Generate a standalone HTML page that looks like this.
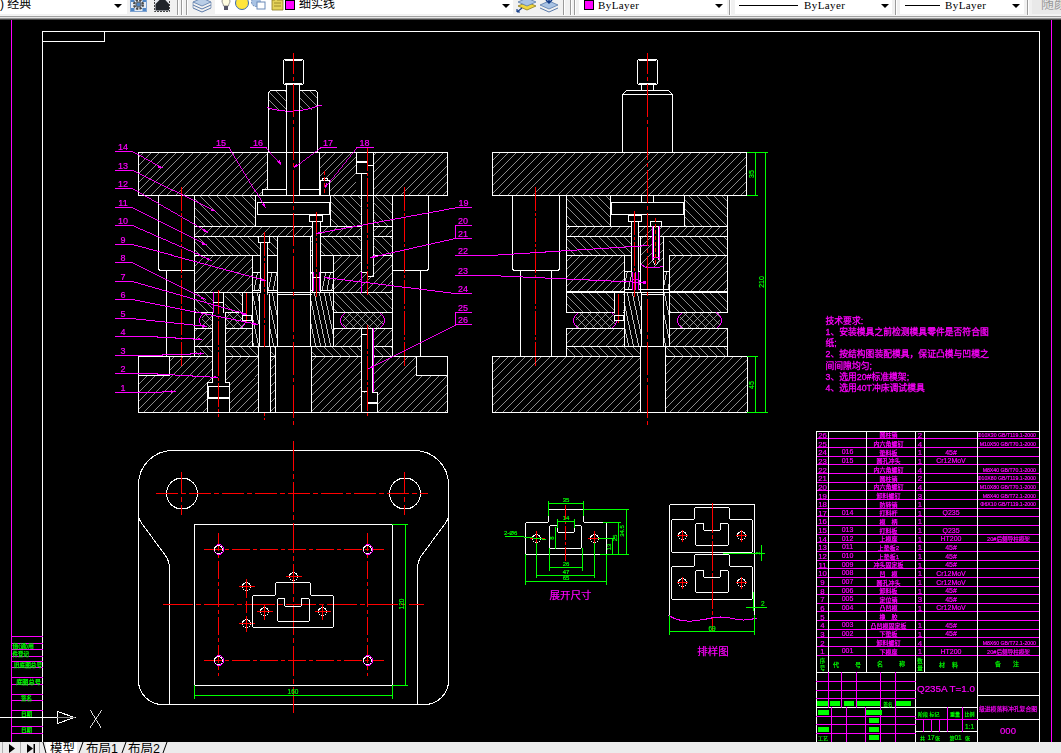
<!DOCTYPE html>
<html lang="zh"><head><meta charset="utf-8"><title>AutoCAD</title>
<style>
html,body{margin:0;padding:0;background:#000;overflow:hidden}
body{width:1061px;height:753px;position:relative;font-family:"Liberation Sans","Noto Sans CJK SC",sans-serif}
#cad{position:absolute;left:0;top:0;width:1061px;height:753px;display:block;will-change:transform}
#cad text{font-family:"Liberation Sans","Noto Sans CJK SC",sans-serif}
#top{position:absolute;left:0;top:0;width:1061px;height:20px;background:#f1f1f1;overflow:hidden;font-size:12px;line-height:12px;color:#000}
#top .w{position:absolute;top:0;height:14px;background:#fff}
#top .t{position:absolute;top:-2px;white-space:nowrap}
#top .by{font-family:"Liberation Serif",serif;font-size:11px;top:-1px;letter-spacing:0.4px}
#top .ar{position:absolute;top:4px;width:0;height:0;border-left:4px solid transparent;border-right:4px solid transparent;border-top:4px solid #000}
#top .sq{position:absolute;top:0;width:8px;height:8px;background:#f0f;border:1px solid #000}
#top .ln{position:absolute;top:5px;height:1px;background:#000}
#top .sep{position:absolute;top:0;width:1px;height:15px;background:#9a9a9a;border-right:1px solid #fff}
#top .edge{position:absolute;left:0;top:15px;width:1061px;height:5px;background:linear-gradient(#f4f4f4 0,#f4f4f4 20%,#a0a0a0 20%,#a0a0a0 40%,#e6e6e6 40%,#e6e6e6 60%,#969696 60%,#969696 80%,#4a4a4a 80%,#4a4a4a 100%)}
#top .ic{position:absolute;top:0}
#bot{position:absolute;left:0;top:742px;width:1061px;height:11px;background:#ececec;overflow:hidden;font-size:12.5px;line-height:12px;color:#000}
#bot .t{position:absolute;top:1px;white-space:nowrap}
#bot .tab{position:absolute;top:0;height:11px;background:#fff}

</style></head><body>
<svg id="cad" width="1061" height="753" viewBox="0 0 1061 753" shape-rendering="crispEdges" fill="none" stroke-width="1">
<rect x="0" y="0" width="1061" height="753" fill="#000"/>
<g id="front">
<path d="M142.7 153L139 156.7M151.04 153L139 165.04M159.38 153L139 173.38M167.72 153L139 181.72M176.06 153L139 190.06M184.4 153L142.4 195M192.74 153L150.74 195M201.08 153L159.08 195M209.42 153L167.42 195M217.76 153L175.76 195M226.1 153L184.1 195M234.44 153L192.44 195M242.78 153L200.78 195M251.12 153L209.12 195M259.46 153L217.46 195M267.8 153L225.8 195M276.14 153L234.14 195M284.48 153L242.48 195M292.82 153L250.82 195M301.16 153L259.16 195M309.5 153L267.5 195M317.84 153L275.84 195M326.18 153L284.18 195M334.52 153L292.52 195M342.86 153L300.86 195M351.2 153L309.2 195M359.54 153L317.54 195M367.88 153L325.88 195M376.22 153L334.22 195M384.56 153L342.56 195M392.9 153L350.9 195M401.24 153L359.24 195M409.58 153L367.58 195M417.92 153L375.92 195M426.26 153L384.26 195M434.6 153L392.6 195M442.94 153L400.94 195M447 157.28L409.28 195M447 165.62L417.62 195M447 173.96L425.96 195M447 182.3L434.3 195M447 190.64L442.64 195" stroke="#c0c0c0" fill="none" stroke-width="0.72"/>
<rect x="138.5" y="152.5" width="309" height="43" stroke="#fff" fill="none"/>
<rect x="267" y="153" width="53" height="43" fill="#000"/>
<rect x="262" y="189" width="6" height="7" fill="#000"/>
<line x1="267.5" y1="152" x2="267.5" y2="190" stroke="#fff"/>
<line x1="319.5" y1="152" x2="319.5" y2="196" stroke="#fff"/>
<line x1="262" y1="189.5" x2="287" y2="189.5" stroke="#fff"/>
<line x1="299" y1="189.5" x2="320" y2="189.5" stroke="#fff"/>
<line x1="262.5" y1="189" x2="262.5" y2="196" stroke="#fff"/>
<line x1="262" y1="195.5" x2="320" y2="195.5" stroke="#fff"/>
<rect x="320" y="178" width="10" height="18" fill="#000"/>
<rect x="320.5" y="180.5" width="9" height="15" stroke="#fff" fill="none"/>
<line x1="322" y1="178.5" x2="328" y2="178.5" stroke="#fff"/>
<line x1="322.5" y1="178" x2="322.5" y2="181" stroke="#fff"/>
<line x1="327.5" y1="178" x2="327.5" y2="181" stroke="#fff"/>
<line x1="324.5" y1="171" x2="324.5" y2="199" stroke="#f00" stroke-dasharray="4 2"/>
<rect x="356" y="153" width="18" height="43" fill="#000"/>
<line x1="356.5" y1="152" x2="356.5" y2="174" stroke="#fff"/>
<line x1="373.5" y1="152" x2="373.5" y2="273" stroke="#fff"/>
<line x1="356" y1="161.5" x2="368" y2="161.5" stroke="#fff"/>
<line x1="356" y1="162.5" x2="368" y2="162.5" stroke="#fff"/>
<line x1="356" y1="173.5" x2="368" y2="173.5" stroke="#fff"/>
<line x1="367" y1="165.5" x2="374" y2="165.5" stroke="#fff"/>
<line x1="361.5" y1="173" x2="361.5" y2="273" stroke="#fff"/>
<path d="M269 108.54L270.46 110M269 100.2L278.8 110M269 91.86L287.14 110M276.48 91L295.48 110M284.82 91L303.82 110M293.16 91L312.16 110M301.5 91L317 106.5M309.84 91L317 98.16" stroke="#c0c0c0" fill="none" stroke-width="0.72"/>
<path d="M268.5 152.5V93.5Q268.5 90.5 271.5 90.5H314.5Q317.5 90.5 317.5 93.5V152.5" stroke="#fff" fill="none"/>
<rect x="269" y="110" width="48" height="42" fill="#000"/>
<rect x="286" y="85" width="14" height="117" fill="#000"/>
<path d="M267 107.5Q292 116 321.5 105" stroke="#f0f" fill="none"/>
<line x1="286.5" y1="84" x2="286.5" y2="202" stroke="#fff"/>
<line x1="299.5" y1="84" x2="299.5" y2="202" stroke="#fff"/>
<line x1="286" y1="201.5" x2="300" y2="201.5" stroke="#fff"/>
<rect x="283.5" y="59.5" width="20" height="25" stroke="#fff" fill="none" rx="2"/>
<line x1="285" y1="60.5" x2="302" y2="60.5" stroke="#fff"/>
<line x1="285" y1="83.5" x2="302" y2="83.5" stroke="#fff"/>
<line x1="267" y1="152.5" x2="320" y2="152.5" stroke="#fff"/>
<path d="M195 224.36L196.64 226M195 216.02L204.98 226M195 207.68L213.32 226M195 199.34L221.66 226M200 196L230 226M208.34 196L238.34 226M216.68 196L246.68 226M225.02 196L255.02 226M233.36 196L263.36 226M241.7 196L271.7 226M250.04 196L280.04 226M258.38 196L288.38 226M266.72 196L296.72 226M275.06 196L305.06 226M283.4 196L313.4 226M291.74 196L321.74 226M300.08 196L330.08 226M308.42 196L338.42 226M316.76 196L346.76 226M325.1 196L355.1 226M333.44 196L363.44 226M341.78 196L371.78 226M350.12 196L380.12 226M358.46 196L388.46 226M366.8 196L392 221.2M375.14 196L392 212.86M383.48 196L392 204.52M391.82 196L392 196.18" stroke="#c0c0c0" fill="none" stroke-width="0.72"/>
<rect x="194.5" y="195.5" width="198" height="31" stroke="#fff" fill="none"/>
<rect x="256" y="196" width="74" height="30" fill="#000"/>
<line x1="255.5" y1="195" x2="255.5" y2="227" stroke="#fff"/>
<line x1="330.5" y1="195" x2="330.5" y2="227" stroke="#fff"/>
<rect x="257.5" y="202.5" width="72" height="12" stroke="#fff" fill="none"/>
<path d="M203.34 227L195 235.34M211.68 227L202.68 236M220.02 227L211.02 236M228.36 227L219.36 236M236.7 227L227.7 236M245.04 227L236.04 236M253.38 227L244.38 236M261.72 227L252.72 236M270.06 227L261.06 236M278.4 227L269.4 236M286.74 227L277.74 236M295.08 227L286.08 236M303.42 227L294.42 236M311.76 227L302.76 236M320.1 227L311.1 236M328.44 227L319.44 236M336.78 227L327.78 236M345.12 227L336.12 236M353.46 227L344.46 236M361.8 227L352.8 236M370.14 227L361.14 236M378.48 227L369.48 236M386.82 227L377.82 236M392 230.16L386.16 236" stroke="#c0c0c0" fill="none" stroke-width="0.72"/>
<rect x="194.5" y="226.5" width="198" height="10" stroke="#fff" fill="none"/>
<path d="M195 250.38L199.62 255M195 242.04L207.96 255M198.3 237L216.3 255M206.64 237L224.64 255M214.98 237L232.98 255M223.32 237L241.32 255M231.66 237L249.66 255M240 237L258 255M248.34 237L266.34 255M256.68 237L274.68 255M265.02 237L283.02 255M273.36 237L291.36 255M281.7 237L299.7 255M290.04 237L308.04 255M298.38 237L316.38 255M306.72 237L324.72 255M315.06 237L333.06 255M323.4 237L341.4 255M331.74 237L349.74 255M340.08 237L358.08 255M348.42 237L366.42 255M356.76 237L374.76 255M365.1 237L383.1 255M373.44 237L391.44 255M381.78 237L392 247.22M390.12 237L392 238.88" stroke="#c0c0c0" fill="none" stroke-width="0.72"/>
<rect x="194.5" y="236.5" width="198" height="19" stroke="#fff" fill="none"/>
<path d="M196.36 256L195 257.36M204.7 256L195 265.7M213.04 256L195 274.04M221.38 256L195 282.38M229.72 256L195 290.72M238.06 256L202.06 292M246.4 256L210.4 292M252 258.74L218.74 292M252 267.08L227.08 292M252 275.42L235.42 292M252 283.76L243.76 292" stroke="#c0c0c0" fill="none" stroke-width="0.72"/>
<rect x="194.5" y="255.5" width="58" height="37" stroke="#fff" fill="none"/>
<path d="M342.14 256L334 264.14M350.48 256L334 272.48M358.82 256L334 280.82M367.16 256L334 289.16M375.5 256L339.5 292M383.84 256L347.84 292M392 256.18L356.18 292M392 264.52L364.52 292M392 272.86L372.86 292M392 281.2L381.2 292M392 289.54L389.54 292" stroke="#c0c0c0" fill="none" stroke-width="0.72"/>
<rect x="333.5" y="255.5" width="59" height="37" stroke="#fff" fill="none"/>
<line x1="252" y1="255.5" x2="334" y2="255.5" stroke="#fff"/>
<path d="M257.4 273L254 290M262.2 273L258.8 290M267 273L263.6 290M271.8 273L268.4 290M276.6 273L273.2 290" stroke="#c0c0c0" fill="none" stroke-width="0.99"/>
<path d="M311.2 273L311 274M316 273L312.6 290M320.8 273L317.4 290M325.6 273L322.2 290M330.4 273L327 290M333 284L331.8 290" stroke="#c0c0c0" fill="none" stroke-width="0.99"/>
<line x1="252" y1="272.5" x2="278" y2="272.5" stroke="#fff"/>
<line x1="310" y1="272.5" x2="334" y2="272.5" stroke="#fff"/>
<line x1="252" y1="290.5" x2="334" y2="290.5" stroke="#fff"/>
<line x1="194" y1="292.5" x2="393" y2="292.5" stroke="#fff"/>
<path d="M195 307.76L199.24 312M195 299.42L207.58 312M196.92 293L215.92 312M205.26 293L224.26 312M213.6 293L232.6 312M221.94 293L240.94 312M230.28 293L249.28 312M238.62 293L252 306.38M246.96 293L252 298.04" stroke="#c0c0c0" fill="none" stroke-width="0.72"/>
<rect x="194.5" y="292.5" width="58" height="20" stroke="#fff" fill="none"/>
<path d="M334 308.98L337.02 312M334 300.64L345.36 312M334.7 293L353.7 312M343.04 293L362.04 312M351.38 293L370.38 312M359.72 293L378.72 312M368.06 293L387.06 312M376.4 293L392 308.6M384.74 293L392 300.26" stroke="#c0c0c0" fill="none" stroke-width="0.72"/>
<rect x="333.5" y="292.5" width="59" height="20" stroke="#fff" fill="none"/>
<path d="M207 313L202 318M215 313L202 326M223 313L208 328M231 313L216 328M239 313L224 328M244 316L232 328M244 324L240 328" stroke="#c0c0c0" fill="none" stroke-width="0.72"/>
<path d="M202 327L203 328M202 319L211 328M204 313L219 328M212 313L227 328M220 313L235 328M228 313L243 328M236 313L244 321" stroke="#c0c0c0" fill="none" stroke-width="0.72"/>
<path d="M204.5 312.5Q194.5 320.5 204.5 328.5" stroke="#f0f" fill="none"/>
<path d="M240.5 312.5Q250.5 320.5 240.5 328.5" stroke="#f0f" fill="none"/>
<line x1="204" y1="312.5" x2="242" y2="312.5" stroke="#fff"/>
<line x1="204" y1="328.5" x2="242" y2="328.5" stroke="#fff"/>
<path d="M351 313L343 321M359 313L344 328M367 313L352 328M375 313L360 328M383 313L368 328M383 321L376 328" stroke="#c0c0c0" fill="none" stroke-width="0.72"/>
<path d="M343 324L347 328M343 316L355 328M348 313L363 328M356 313L371 328M364 313L379 328M372 313L383 324M380 313L383 316" stroke="#c0c0c0" fill="none" stroke-width="0.72"/>
<path d="M345.5 312.5Q335.5 320.5 345.5 328.5" stroke="#f0f" fill="none"/>
<path d="M379.5 312.5Q389.5 320.5 379.5 328.5" stroke="#f0f" fill="none"/>
<line x1="345" y1="312.5" x2="381" y2="312.5" stroke="#fff"/>
<line x1="345" y1="328.5" x2="381" y2="328.5" stroke="#fff"/>
<path d="M197.42 329L195 331.42M205.76 329L195 339.76M214.1 329L197.1 346M222.44 329L205.44 346M230.78 329L213.78 346M239.12 329L222.12 346M247.46 329L230.46 346M252 332.8L238.8 346M252 341.14L247.14 346" stroke="#c0c0c0" fill="none" stroke-width="0.72"/>
<rect x="194.5" y="328.5" width="58" height="18" stroke="#fff" fill="none"/>
<path d="M334.86 329L334 329.86M343.2 329L334 338.2M351.54 329L334.54 346M359.88 329L342.88 346M368.22 329L351.22 346M376.56 329L359.56 346M384.9 329L367.9 346M392 330.24L376.24 346M392 338.58L384.58 346" stroke="#c0c0c0" fill="none" stroke-width="0.72"/>
<rect x="333.5" y="328.5" width="59" height="18" stroke="#fff" fill="none"/>
<path d="M253 343.1L253.62 346M253 319.6L258.62 346M253 296.1L263.62 346M257.34 293L268.62 346M262.34 293L273.62 346M267.34 293L277 338.4M272.34 293L277 314.9" stroke="#c0c0c0" fill="none" stroke-width="0.99"/>
<rect x="252.5" y="292.5" width="25" height="54" stroke="#fff" fill="none"/>
<path d="M311 324.3L315.62 346M311 300.8L320.62 346M314.34 293L325.62 346M319.34 293L330.62 346M324.34 293L333 333.7M329.34 293L333 310.2" stroke="#c0c0c0" fill="none" stroke-width="0.99"/>
<rect x="310.5" y="292.5" width="23" height="54" stroke="#fff" fill="none"/>
<path d="M195 351.46L199.54 356M198.88 347L207.88 356M207.22 347L216.22 356M215.56 347L224.56 356M223.9 347L232.9 356M232.24 347L241.24 356M240.58 347L249.58 356M248.92 347L257.92 356M257.26 347L266.26 356M265.6 347L274.6 356M273.94 347L282.94 356M282.28 347L291.28 356M290.62 347L299.62 356M298.96 347L307.96 356M307.3 347L316.3 356M315.64 347L324.64 356M323.98 347L332.98 356M332.32 347L341.32 356M340.66 347L349.66 356M349 347L358 356M357.34 347L366.34 356M365.68 347L374.68 356M374.02 347L383.02 356M382.36 347L391.36 356M390.7 347L392 348.3" stroke="#c0c0c0" fill="none" stroke-width="0.72"/>
<rect x="194.5" y="346.5" width="198" height="10" stroke="#fff" fill="none"/>
<path d="M141.06 357L139 359.06M149.4 357L139 367.4M157.74 357L139 375.74M166.08 357L139 384.08M174.42 357L139 392.42M182.76 357L139 400.76M191.1 357L139 409.1M199.44 357L144.44 412M207.78 357L152.78 412M216.12 357L161.12 412M224.46 357L169.46 412M232.8 357L177.8 412M241.14 357L186.14 412M249.48 357L194.48 412M257.82 357L202.82 412M266.16 357L211.16 412M274.5 357L219.5 412M282.84 357L227.84 412M291.18 357L236.18 412M299.52 357L244.52 412M307.86 357L252.86 412M316.2 357L261.2 412M324.54 357L269.54 412M332.88 357L277.88 412M341.22 357L286.22 412M349.56 357L294.56 412M357.9 357L302.9 412M366.24 357L311.24 412M374.58 357L319.58 412M382.92 357L327.92 412M391.26 357L336.26 412M399.6 357L344.6 412M407.94 357L352.94 412M416.28 357L361.28 412M424.62 357L369.62 412M432.96 357L377.96 412M441.3 357L386.3 412M447 359.64L394.64 412M447 367.98L402.98 412M447 376.32L411.32 412M447 384.66L419.66 412M447 393L428 412M447 401.34L436.34 412M447 409.68L444.68 412" stroke="#c0c0c0" fill="none" stroke-width="0.72"/>
<rect x="138.5" y="356.5" width="309" height="56" stroke="#fff" fill="none"/>
<rect x="139" y="357" width="30" height="18" fill="#000"/>
<line x1="169.5" y1="356" x2="169.5" y2="376" stroke="#fff"/>
<line x1="138" y1="375.5" x2="170" y2="375.5" stroke="#fff"/>
<rect x="417" y="357" width="30" height="18" fill="#000"/>
<line x1="416.5" y1="356" x2="416.5" y2="376" stroke="#fff"/>
<line x1="416" y1="375.5" x2="448" y2="375.5" stroke="#fff"/>
<rect x="278" y="237" width="32" height="109" fill="#000"/>
<rect x="276" y="347" width="35" height="65" fill="#000"/>
<line x1="277.5" y1="236" x2="277.5" y2="347" stroke="#fff"/>
<line x1="310.5" y1="236" x2="310.5" y2="347" stroke="#fff"/>
<line x1="275.5" y1="346" x2="275.5" y2="413" stroke="#fff"/>
<line x1="311.5" y1="346" x2="311.5" y2="413" stroke="#fff"/>
<line x1="277" y1="292.5" x2="312" y2="292.5" stroke="#fff"/>
<line x1="277" y1="294.5" x2="312" y2="294.5" stroke="#fff"/>
<line x1="277" y1="346.5" x2="312" y2="346.5" stroke="#fff"/>
<rect x="313" y="222" width="7" height="70" fill="#000"/>
<rect x="309.5" y="215.5" width="13" height="6" stroke="#fff" fill="none"/>
<line x1="312.5" y1="221" x2="312.5" y2="293" stroke="#fff"/>
<line x1="320.5" y1="221" x2="320.5" y2="293" stroke="#fff"/>
<line x1="313.5" y1="272" x2="313.5" y2="291" stroke="#f0f"/>
<line x1="319.5" y1="272" x2="319.5" y2="291" stroke="#f0f"/>
<line x1="313" y1="277.5" x2="321" y2="277.5" stroke="#fff"/>
<line x1="316.5" y1="212" x2="316.5" y2="297" stroke="#f00" stroke-dasharray="24 2 3 2"/>
<rect x="261" y="243" width="6" height="103" fill="#000"/>
<rect x="259" y="237" width="10" height="5" fill="#000"/>
<rect x="258.5" y="236.5" width="11" height="6" stroke="#fff" fill="none"/>
<line x1="260.5" y1="242" x2="260.5" y2="293" stroke="#fff"/>
<line x1="259.5" y1="294" x2="259.5" y2="347" stroke="#fff"/>
<line x1="269.5" y1="294" x2="269.5" y2="347" stroke="#fff"/>
<line x1="267.5" y1="242" x2="267.5" y2="293" stroke="#fff"/>
<rect x="260" y="295" width="9" height="51" fill="#000"/>
<line x1="264.5" y1="232" x2="264.5" y2="420" stroke="#f00" stroke-dasharray="24 2 3 2"/>
<rect x="259" y="347" width="11" height="65" fill="#000"/>
<line x1="258.5" y1="346" x2="258.5" y2="413" stroke="#fff"/>
<line x1="270.5" y1="346" x2="270.5" y2="413" stroke="#fff"/>
<rect x="158" y="196" width="37" height="161" fill="#000"/>
<path d="M158.5 195.5V267.5Q158.5 270.5 161.5 270.5H194.5" stroke="#fff" fill="none"/>
<line x1="194.5" y1="195" x2="194.5" y2="357" stroke="#fff"/>
<line x1="166.5" y1="270" x2="166.5" y2="357" stroke="#fff"/>
<line x1="181.5" y1="187" x2="181.5" y2="366" stroke="#f00" stroke-dasharray="24 2 3 2"/>
<rect x="392" y="196" width="37" height="161" fill="#000"/>
<path d="M428.5 195.5V267.5Q428.5 270.5 425.5 270.5H392.5" stroke="#fff" fill="none"/>
<line x1="392.5" y1="195" x2="392.5" y2="357" stroke="#fff"/>
<line x1="420.5" y1="270" x2="420.5" y2="357" stroke="#fff"/>
<line x1="404.5" y1="187" x2="404.5" y2="366" stroke="#f00" stroke-dasharray="24 2 3 2"/>
<rect x="139" y="196" width="19" height="160" fill="#000"/>
<rect x="159" y="271.5" width="7" height="84.5" fill="#000"/>
<rect x="429" y="196" width="18" height="160" fill="#000"/>
<rect x="421" y="271.5" width="8" height="84.5" fill="#000"/>
<line x1="138" y1="356.5" x2="195" y2="356.5" stroke="#fff"/>
<line x1="392" y1="356.5" x2="448" y2="356.5" stroke="#fff"/>
<rect x="213" y="293" width="12" height="93" fill="#000"/>
<rect x="208" y="383" width="21" height="29" fill="#000"/>
<line x1="212.5" y1="312" x2="212.5" y2="383" stroke="#fff"/>
<line x1="225.5" y1="312" x2="225.5" y2="383" stroke="#fff"/>
<line x1="213.5" y1="292" x2="213.5" y2="313" stroke="#f0f"/>
<line x1="223.5" y1="292" x2="223.5" y2="313" stroke="#fff"/>
<line x1="213" y1="302.5" x2="224" y2="302.5" stroke="#fff"/>
<line x1="207.5" y1="382" x2="207.5" y2="413" stroke="#fff"/>
<line x1="229.5" y1="382" x2="229.5" y2="413" stroke="#fff"/>
<line x1="207" y1="382.5" x2="213" y2="382.5" stroke="#fff"/>
<line x1="225" y1="382.5" x2="230" y2="382.5" stroke="#fff"/>
<rect x="208.5" y="386.5" width="21" height="11" stroke="#fff" fill="none"/>
<line x1="208" y1="398.5" x2="230" y2="398.5" stroke="#fff"/>
<line x1="218.5" y1="290" x2="218.5" y2="417" stroke="#f00" stroke-dasharray="24 2 3 2"/>
<rect x="243" y="293" width="9" height="27" fill="#000"/>
<line x1="242.5" y1="292" x2="242.5" y2="313" stroke="#fff"/>
<line x1="246.5" y1="293" x2="246.5" y2="323" stroke="#f00"/>
<rect x="242.5" y="315.5" width="9" height="5" stroke="#fff" fill="none"/>
<rect x="362" y="196" width="11" height="76" fill="#000"/>
<line x1="361" y1="272.5" x2="368" y2="272.5" stroke="#fff"/>
<line x1="367" y1="276.5" x2="374" y2="276.5" stroke="#fff"/>
<line x1="373.5" y1="272" x2="373.5" y2="277" stroke="#fff"/>
<line x1="361.5" y1="272" x2="361.5" y2="293" stroke="#f0f"/>
<line x1="367.5" y1="147" x2="367.5" y2="296" stroke="#f00" stroke-dasharray="24 2 3 2"/>
<rect x="362" y="329" width="11" height="63" fill="#000"/>
<rect x="362" y="393" width="15" height="19" fill="#000"/>
<line x1="361.5" y1="328" x2="361.5" y2="413" stroke="#fff"/>
<line x1="373.5" y1="328" x2="373.5" y2="393" stroke="#f0f"/>
<line x1="372.5" y1="328" x2="372.5" y2="393" stroke="#fff"/>
<line x1="361" y1="334.5" x2="368" y2="334.5" stroke="#fff"/>
<line x1="373" y1="392.5" x2="378" y2="392.5" stroke="#fff"/>
<line x1="377.5" y1="392" x2="377.5" y2="413" stroke="#fff"/>
<line x1="361" y1="391.5" x2="368" y2="391.5" stroke="#fff"/>
<line x1="367" y1="402.5" x2="378" y2="402.5" stroke="#fff"/>
<line x1="367" y1="403.5" x2="378" y2="403.5" stroke="#fff"/>
<line x1="367.5" y1="325" x2="367.5" y2="417" stroke="#f00" stroke-dasharray="24 2 3 2"/>
<line x1="293.5" y1="53" x2="293.5" y2="425" stroke="#f00" stroke-dasharray="33 3 4 3" stroke-dashoffset="12"/>
<text x="123" y="150" font-size="9" fill="#f0f" stroke="#f0f" stroke-width="0.2" text-anchor="middle">14</text>
<line x1="115" y1="151.5" x2="132" y2="151.5" stroke="#f0f"/>
<line x1="131.5" y1="151.5" x2="162.5" y2="168.5" stroke="#f0f" stroke-width="0.89"/>
<polygon points="162.5,168.5 157.93,167.48 159.18,165.2" fill="#f0f"/>
<text x="123" y="169" font-size="9" fill="#f0f" stroke="#f0f" stroke-width="0.2" text-anchor="middle">13</text>
<line x1="115" y1="170.5" x2="132" y2="170.5" stroke="#f0f"/>
<line x1="131.5" y1="170.5" x2="215.5" y2="211.5" stroke="#f0f" stroke-width="0.91"/>
<polygon points="215.5,211.5 210.89,210.69 212.03,208.36" fill="#f0f"/>
<text x="123" y="187" font-size="9" fill="#f0f" stroke="#f0f" stroke-width="0.2" text-anchor="middle">12</text>
<line x1="115" y1="188.5" x2="132" y2="188.5" stroke="#f0f"/>
<line x1="131.5" y1="188.5" x2="207.5" y2="232.5" stroke="#f0f" stroke-width="0.88"/>
<polygon points="207.5,232.5 202.95,231.37 204.26,229.12" fill="#f0f"/>
<text x="123" y="206" font-size="9" fill="#f0f" stroke="#f0f" stroke-width="0.2" text-anchor="middle">11</text>
<line x1="115" y1="207.5" x2="132" y2="207.5" stroke="#f0f"/>
<line x1="131.5" y1="207.5" x2="206.5" y2="245.5" stroke="#f0f" stroke-width="0.9"/>
<polygon points="206.5,245.5 201.9,244.63 203.07,242.31" fill="#f0f"/>
<text x="123" y="224" font-size="9" fill="#f0f" stroke="#f0f" stroke-width="0.2" text-anchor="middle">10</text>
<line x1="115" y1="225.5" x2="132" y2="225.5" stroke="#f0f"/>
<line x1="131.5" y1="225.5" x2="211.5" y2="260.5" stroke="#f0f" stroke-width="0.93"/>
<polygon points="211.5,260.5 206.86,259.89 207.9,257.51" fill="#f0f"/>
<text x="123" y="243" font-size="9" fill="#f0f" stroke="#f0f" stroke-width="0.2" text-anchor="middle">9</text>
<line x1="115" y1="244.5" x2="132" y2="244.5" stroke="#f0f"/>
<line x1="131.5" y1="244.5" x2="265.5" y2="280.5" stroke="#f0f" stroke-width="0.98"/>
<polygon points="265.5,280.5 260.82,280.59 261.49,278.08" fill="#f0f"/>
<text x="123" y="261" font-size="9" fill="#f0f" stroke="#f0f" stroke-width="0.2" text-anchor="middle">8</text>
<line x1="115" y1="262.5" x2="132" y2="262.5" stroke="#f0f"/>
<line x1="131.5" y1="262.5" x2="205.5" y2="299.5" stroke="#f0f" stroke-width="0.9"/>
<polygon points="205.5,299.5 200.89,298.65 202.06,296.32" fill="#f0f"/>
<text x="123" y="280" font-size="9" fill="#f0f" stroke="#f0f" stroke-width="0.2" text-anchor="middle">7</text>
<line x1="115" y1="281.5" x2="132" y2="281.5" stroke="#f0f"/>
<line x1="131.5" y1="281.5" x2="246.5" y2="314.5" stroke="#f0f" stroke-width="0.97"/>
<polygon points="246.5,314.5 241.82,314.51 242.53,312.01" fill="#f0f"/>
<text x="123" y="298" font-size="9" fill="#f0f" stroke="#f0f" stroke-width="0.2" text-anchor="middle">6</text>
<line x1="115" y1="299.5" x2="132" y2="299.5" stroke="#f0f"/>
<line x1="131.5" y1="299.5" x2="257.5" y2="324.5" stroke="#f0f" stroke-width="0.99"/>
<polygon points="257.5,324.5 252.83,324.9 253.34,322.35" fill="#f0f"/>
<text x="123" y="317" font-size="9" fill="#f0f" stroke="#f0f" stroke-width="0.2" text-anchor="middle">5</text>
<line x1="115" y1="318.5" x2="132" y2="318.5" stroke="#f0f"/>
<line x1="131.5" y1="318.5" x2="207.5" y2="326.5" stroke="#f0f" stroke-width="1"/>
<polygon points="207.5,326.5 202.89,327.32 203.16,324.74" fill="#f0f"/>
<text x="123" y="335" font-size="9" fill="#f0f" stroke="#f0f" stroke-width="0.2" text-anchor="middle">4</text>
<line x1="115" y1="336.5" x2="132" y2="336.5" stroke="#f0f"/>
<line x1="148.5" y1="336.5" x2="202.5" y2="339.5" stroke="#f0f" stroke-width="1.01"/>
<polygon points="202.5,339.5 197.93,340.55 198.08,337.95" fill="#f0f"/>
<line x1="131" y1="336.5" x2="149" y2="336.5" stroke="#f0f"/>
<text x="123" y="354" font-size="9" fill="#f0f" stroke="#f0f" stroke-width="0.2" text-anchor="middle">3</text>
<line x1="115" y1="355.5" x2="132" y2="355.5" stroke="#f0f"/>
<line x1="148.5" y1="355.5" x2="204.5" y2="353.5" stroke="#f0f" stroke-width="1.01"/>
<polygon points="204.5,353.5 200.05,354.96 199.96,352.36" fill="#f0f"/>
<line x1="131" y1="355.5" x2="149" y2="355.5" stroke="#f0f"/>
<text x="123" y="372" font-size="9" fill="#f0f" stroke="#f0f" stroke-width="0.2" text-anchor="middle">2</text>
<line x1="115" y1="373.5" x2="132" y2="373.5" stroke="#f0f"/>
<line x1="148.5" y1="373.5" x2="218.5" y2="377.5" stroke="#f0f" stroke-width="1.01"/>
<polygon points="218.5,377.5 213.93,378.54 214.08,375.95" fill="#f0f"/>
<line x1="131" y1="373.5" x2="149" y2="373.5" stroke="#f0f"/>
<text x="123" y="391" font-size="9" fill="#f0f" stroke="#f0f" stroke-width="0.2" text-anchor="middle">1</text>
<line x1="115" y1="392.5" x2="132" y2="392.5" stroke="#f0f"/>
<line x1="148.5" y1="392.5" x2="175.5" y2="391.5" stroke="#f0f" stroke-width="1.01"/>
<polygon points="175.5,391.5 171.05,392.97 170.95,390.37" fill="#f0f"/>
<line x1="131" y1="392.5" x2="149" y2="392.5" stroke="#f0f"/>
<text x="221" y="146" font-size="9" fill="#f0f" stroke="#f0f" stroke-width="0.2" text-anchor="middle">15</text>
<line x1="213" y1="147.5" x2="230" y2="147.5" stroke="#f0f"/>
<line x1="229.5" y1="147.5" x2="265.5" y2="207.5" stroke="#f0f" stroke-width="0.87"/>
<polygon points="265.5,207.5 262.07,204.31 264.3,202.97" fill="#f0f"/>
<text x="258" y="146" font-size="9" fill="#f0f" stroke="#f0f" stroke-width="0.2" text-anchor="middle">16</text>
<line x1="250" y1="147.5" x2="267" y2="147.5" stroke="#f0f"/>
<line x1="266.5" y1="147.5" x2="281.5" y2="164.5" stroke="#f0f" stroke-width="0.76"/>
<polygon points="281.5,164.5 277.55,161.99 279.5,160.27" fill="#f0f"/>
<text x="328" y="146" font-size="9" fill="#f0f" stroke="#f0f" stroke-width="0.2" text-anchor="middle">17</text>
<line x1="320" y1="147.5" x2="337" y2="147.5" stroke="#f0f"/>
<line x1="320.5" y1="147.5" x2="293.5" y2="167.5" stroke="#f0f" stroke-width="0.81"/>
<polygon points="293.5,167.5 296.34,163.78 297.89,165.87" fill="#f0f"/>
<text x="364.5" y="146" font-size="9" fill="#f0f" stroke="#f0f" stroke-width="0.2" text-anchor="middle">18</text>
<line x1="356" y1="147.5" x2="374" y2="147.5" stroke="#f0f"/>
<line x1="356.5" y1="147.5" x2="324.5" y2="187.5" stroke="#f0f" stroke-width="0.79"/>
<polygon points="324.5,187.5 326.3,183.17 328.33,184.8" fill="#f0f"/>
<text x="463.5" y="206" font-size="9" fill="#f0f" stroke="#f0f" stroke-width="0.2" text-anchor="middle">19</text>
<line x1="456" y1="207.5" x2="472" y2="207.5" stroke="#f0f"/>
<line x1="456.5" y1="207.5" x2="315.5" y2="233.5" stroke="#f0f" stroke-width="0.99"/>
<polygon points="315.5,233.5 319.69,231.41 320.16,233.96" fill="#f0f"/>
<text x="463" y="224" font-size="9" fill="#f0f" stroke="#f0f" stroke-width="0.2" text-anchor="middle">20</text>
<line x1="455" y1="225.5" x2="472" y2="225.5" stroke="#f0f"/>
<text x="463" y="237" font-size="9" fill="#f0f" stroke="#f0f" stroke-width="0.2" text-anchor="middle">21</text>
<line x1="455" y1="238.5" x2="472" y2="238.5" stroke="#f0f"/>
<line x1="455.5" y1="238.5" x2="370.5" y2="257.5" stroke="#f0f" stroke-width="0.99"/>
<polygon points="370.5,257.5 374.61,255.25 375.18,257.79" fill="#f0f"/>
<line x1="455.5" y1="225" x2="455.5" y2="239" stroke="#f0f"/>
<text x="463" y="254" font-size="9" fill="#f0f" stroke="#f0f" stroke-width="0.2" text-anchor="middle">22</text>
<line x1="455" y1="255.5" x2="472" y2="255.5" stroke="#f0f"/>
<text x="463" y="274" font-size="9" fill="#f0f" stroke="#f0f" stroke-width="0.2" text-anchor="middle">23</text>
<line x1="455" y1="275.5" x2="472" y2="275.5" stroke="#f0f"/>
<text x="463" y="292" font-size="9" fill="#f0f" stroke="#f0f" stroke-width="0.2" text-anchor="middle">24</text>
<line x1="455" y1="293.5" x2="472" y2="293.5" stroke="#f0f"/>
<line x1="455.5" y1="293.5" x2="324.5" y2="277.5" stroke="#f0f" stroke-width="1"/>
<polygon points="324.5,277.5 329.12,276.76 328.81,279.34" fill="#f0f"/>
<text x="463" y="311" font-size="9" fill="#f0f" stroke="#f0f" stroke-width="0.2" text-anchor="middle">25</text>
<line x1="455" y1="312.5" x2="472" y2="312.5" stroke="#f0f"/>
<text x="463" y="323" font-size="9" fill="#f0f" stroke="#f0f" stroke-width="0.2" text-anchor="middle">26</text>
<line x1="455" y1="324.5" x2="472" y2="324.5" stroke="#f0f"/>
<line x1="455.5" y1="324.5" x2="368.5" y2="368.5" stroke="#f0f" stroke-width="0.9"/>
<polygon points="368.5,368.5 371.93,365.31 373.1,367.63" fill="#f0f"/>
<line x1="455.5" y1="312" x2="455.5" y2="325" stroke="#f0f"/>
</g>
<g id="side">
<path d="M499.52 153L493 159.52M507.86 153L493 167.86M516.2 153L493 176.2M524.54 153L493 184.54M532.88 153L493 192.88M541.22 153L499.22 195M549.56 153L507.56 195M557.9 153L515.9 195M566.24 153L524.24 195M574.58 153L532.58 195M582.92 153L540.92 195M591.26 153L549.26 195M599.6 153L557.6 195M607.94 153L565.94 195M616.28 153L574.28 195M624.62 153L582.62 195M632.96 153L590.96 195M641.3 153L599.3 195M649.64 153L607.64 195M657.98 153L615.98 195M666.32 153L624.32 195M674.66 153L632.66 195M683 153L641 195M691.34 153L649.34 195M699.68 153L657.68 195M708.02 153L666.02 195M716.36 153L674.36 195M724.7 153L682.7 195M733.04 153L691.04 195M741.38 153L699.38 195M746 156.72L707.72 195M746 165.06L716.06 195M746 173.4L724.4 195M746 181.74L732.74 195M746 190.08L741.08 195" stroke="#c0c0c0" fill="none" stroke-width="0.72"/>
<rect x="492.5" y="152.5" width="254" height="43" stroke="#fff" fill="none"/>
<path d="M622.5 152.5V94.5L626.5 90.5H668.5L672.5 94.5V152.5" stroke="#fff" fill="none"/>
<line x1="622" y1="94.5" x2="673" y2="94.5" stroke="#fff"/>
<rect x="637.5" y="59.5" width="20" height="25" stroke="#fff" fill="none" rx="2"/>
<line x1="639" y1="60.5" x2="656" y2="60.5" stroke="#fff"/>
<line x1="639" y1="83.5" x2="656" y2="83.5" stroke="#fff"/>
<line x1="641.5" y1="84" x2="641.5" y2="91" stroke="#fff"/>
<line x1="653.5" y1="84" x2="653.5" y2="91" stroke="#fff"/>
<path d="M512.5 195.5V267.5Q512.5 270.5 515.5 270.5H556.5Q559.5 270.5 559.5 267.5V195.5" stroke="#fff" fill="none"/>
<line x1="520.5" y1="270" x2="520.5" y2="357" stroke="#fff"/>
<line x1="551.5" y1="270" x2="551.5" y2="357" stroke="#fff"/>
<line x1="535.5" y1="187" x2="535.5" y2="366" stroke="#f00" stroke-dasharray="24 2 3 2"/>
<path d="M567 224.06L568.94 226M567 215.72L577.28 226M567 207.38L585.62 226M567 199.04L593.96 226M572.3 196L602.3 226M580.64 196L610.64 226M588.98 196L618.98 226M597.32 196L627.32 226M605.66 196L635.66 226M614 196L644 226M622.34 196L652.34 226M630.68 196L660.68 226M639.02 196L669.02 226M647.36 196L677.36 226M655.7 196L685.7 226M664.04 196L694.04 226M672.38 196L702.38 226M680.72 196L710.72 226M689.06 196L719.06 226M697.4 196L727 225.6M705.74 196L727 217.26M714.08 196L727 208.92M722.42 196L727 200.58" stroke="#c0c0c0" fill="none" stroke-width="0.72"/>
<rect x="566.5" y="195.5" width="161" height="31" stroke="#fff" fill="none"/>
<rect x="611" y="196" width="73" height="30" fill="#000"/>
<line x1="610.5" y1="195" x2="610.5" y2="227" stroke="#fff"/>
<line x1="684.5" y1="195" x2="684.5" y2="227" stroke="#fff"/>
<rect x="611.5" y="202.5" width="72" height="12" stroke="#fff" fill="none"/>
<line x1="641.5" y1="195" x2="641.5" y2="203" stroke="#fff"/>
<line x1="653.5" y1="195" x2="653.5" y2="203" stroke="#fff"/>
<path d="M570.3 227L567 230.3M578.64 227L569.64 236M586.98 227L577.98 236M595.32 227L586.32 236M603.66 227L594.66 236M612 227L603 236M620.34 227L611.34 236M628.68 227L619.68 236M637.02 227L628.02 236M645.36 227L636.36 236M653.7 227L644.7 236M662.04 227L653.04 236M670.38 227L661.38 236M678.72 227L669.72 236M687.06 227L678.06 236M695.4 227L686.4 236M703.74 227L694.74 236M712.08 227L703.08 236M720.42 227L711.42 236M727 228.76L719.76 236" stroke="#c0c0c0" fill="none" stroke-width="0.72"/>
<rect x="566.5" y="226.5" width="161" height="10" stroke="#fff" fill="none"/>
<path d="M567 247.08L574.92 255M567 238.74L583.26 255M573.6 237L591.6 255M581.94 237L599.94 255M590.28 237L608.28 255M598.62 237L616.62 255M606.96 237L624.96 255M615.3 237L633.3 255M623.64 237L641.64 255M631.98 237L649.98 255M640.32 237L658.32 255M648.66 237L666.66 255M657 237L675 255M665.34 237L683.34 255M673.68 237L691.68 255M682.02 237L700.02 255M690.36 237L708.36 255M698.7 237L716.7 255M707.04 237L725.04 255M715.38 237L727 248.62M723.72 237L727 240.28" stroke="#c0c0c0" fill="none" stroke-width="0.72"/>
<rect x="566.5" y="236.5" width="161" height="19" stroke="#fff" fill="none"/>
<path d="M571.66 256L567 260.66M580 256L567 269M588.34 256L567 277.34M596.68 256L567 285.68M605.02 256L569.02 292M613.36 256L577.36 292M621.7 256L585.7 292M624 262.04L594.04 292M624 270.38L602.38 292M624 278.72L610.72 292M624 287.06L619.06 292" stroke="#c0c0c0" fill="none" stroke-width="0.72"/>
<rect x="566.5" y="255.5" width="58" height="37" stroke="#fff" fill="none"/>
<path d="M675.74 256L670 261.74M684.08 256L670 270.08M692.42 256L670 278.42M700.76 256L670 286.76M709.1 256L673.1 292M717.44 256L681.44 292M725.78 256L689.78 292M727 263.12L698.12 292M727 271.46L706.46 292M727 279.8L714.8 292M727 288.14L723.14 292" stroke="#c0c0c0" fill="none" stroke-width="0.72"/>
<rect x="669.5" y="255.5" width="58" height="37" stroke="#fff" fill="none"/>
<line x1="624" y1="255.5" x2="670" y2="255.5" stroke="#fff"/>
<path d="M567 304.46L574.54 312M567 296.12L582.88 312M572.22 293L591.22 312M580.56 293L599.56 312M588.9 293L607.9 312M597.24 293L616.24 312M605.58 293L624 311.42M613.92 293L624 303.08M622.26 293L624 294.74" stroke="#c0c0c0" fill="none" stroke-width="0.72"/>
<rect x="566.5" y="292.5" width="58" height="20" stroke="#fff" fill="none"/>
<path d="M670 311.38L670.62 312M670 303.04L678.96 312M670 294.7L687.3 312M676.64 293L695.64 312M684.98 293L703.98 312M693.32 293L712.32 312M701.66 293L720.66 312M710 293L727 310M718.34 293L727 301.66M726.68 293L727 293.32" stroke="#c0c0c0" fill="none" stroke-width="0.72"/>
<rect x="669.5" y="292.5" width="58" height="20" stroke="#fff" fill="none"/>
<line x1="566" y1="291.5" x2="728" y2="291.5" stroke="#fff"/>
<path d="M583 313L576 320M591 313L576 328M599 313L584 328M607 313L592 328M615 313L600 328M615 321L608 328" stroke="#c0c0c0" fill="none" stroke-width="0.72"/>
<path d="M576 325L579 328M576 317L587 328M580 313L595 328M588 313L603 328M596 313L611 328M604 313L615 324M612 313L615 316" stroke="#c0c0c0" fill="none" stroke-width="0.72"/>
<path d="M578.5 312.5Q568.5 320.5 578.5 328.5" stroke="#f0f" fill="none"/>
<path d="M611.5 312.5Q621.5 320.5 611.5 328.5" stroke="#f0f" fill="none"/>
<path d="M687 313L680 320M695 313L680 328M703 313L688 328M711 313L696 328M719 313L704 328M720 320L712 328" stroke="#c0c0c0" fill="none" stroke-width="0.72"/>
<path d="M680 325L683 328M680 317L691 328M684 313L699 328M692 313L707 328M700 313L715 328M708 313L720 325M716 313L720 317" stroke="#c0c0c0" fill="none" stroke-width="0.72"/>
<path d="M682.5 312.5Q672.5 320.5 682.5 328.5" stroke="#f0f" fill="none"/>
<path d="M716.5 312.5Q726.5 320.5 716.5 328.5" stroke="#f0f" fill="none"/>
<path d="M572.72 329L567 334.72M581.06 329L567 343.06M589.4 329L572.4 346M597.74 329L580.74 346M606.08 329L589.08 346M614.42 329L597.42 346M622.76 329L605.76 346M624 336.1L614.1 346M624 344.44L622.44 346" stroke="#c0c0c0" fill="none" stroke-width="0.72"/>
<rect x="566.5" y="328.5" width="58" height="18" stroke="#fff" fill="none"/>
<path d="M676.8 329L670 335.8M685.14 329L670 344.14M693.48 329L676.48 346M701.82 329L684.82 346M710.16 329L693.16 346M718.5 329L701.5 346M726.84 329L709.84 346M727 337.18L718.18 346M727 345.52L726.52 346" stroke="#c0c0c0" fill="none" stroke-width="0.72"/>
<rect x="669.5" y="328.5" width="58" height="18" stroke="#fff" fill="none"/>
<path d="M567 348.16L574.84 356M574.18 347L583.18 356M582.52 347L591.52 356M590.86 347L599.86 356M599.2 347L608.2 356M607.54 347L616.54 356M615.88 347L624.88 356M624.22 347L633.22 356M632.56 347L641.56 356M640.9 347L649.9 356M649.24 347L658.24 356M657.58 347L666.58 356M665.92 347L674.92 356M674.26 347L683.26 356M682.6 347L691.6 356M690.94 347L699.94 356M699.28 347L708.28 356M707.62 347L716.62 356M715.96 347L724.96 356M724.3 347L727 349.7" stroke="#c0c0c0" fill="none" stroke-width="0.72"/>
<rect x="566.5" y="346.5" width="161" height="10" stroke="#fff" fill="none"/>
<path d="M499.68 357L493 363.68M508.02 357L493 372.02M516.36 357L493 380.36M524.7 357L493 388.7M533.04 357L493 397.04M541.38 357L493 405.38M549.72 357L494.72 412M558.06 357L503.06 412M566.4 357L511.4 412M574.74 357L519.74 412M583.08 357L528.08 412M591.42 357L536.42 412M599.76 357L544.76 412M608.1 357L553.1 412M616.44 357L561.44 412M624.78 357L569.78 412M633.12 357L578.12 412M641.46 357L586.46 412M649.8 357L594.8 412M658.14 357L603.14 412M666.48 357L611.48 412M674.82 357L619.82 412M683.16 357L628.16 412M691.5 357L636.5 412M699.84 357L644.84 412M708.18 357L653.18 412M716.52 357L661.52 412M724.86 357L669.86 412M733.2 357L678.2 412M741.54 357L686.54 412M747 359.88L694.88 412M747 368.22L703.22 412M747 376.56L711.56 412M747 384.9L719.9 412M747 393.24L728.24 412M747 401.58L736.58 412M747 409.92L744.92 412" stroke="#c0c0c0" fill="none" stroke-width="0.72"/>
<rect x="492.5" y="356.5" width="255" height="56" stroke="#fff" fill="none"/>
<rect x="631" y="237" width="38" height="55" fill="#000"/>
<rect x="625" y="256" width="44" height="36" fill="#000"/>
<path d="M642.7 237L641 238.7M651.04 237L641 247.04M659.38 237L641 255.38M663 241.72L641 263.72M663 250.06L646.06 267M663 258.4L654.4 267M663 266.74L662.74 267" stroke="#c0c0c0" fill="none" stroke-width="0.72"/>
<path d="M641 264.5L646 267.5H657L663 266.5" stroke="#f0f" fill="none"/>
<line x1="640.5" y1="236" x2="640.5" y2="293" stroke="#fff"/>
<line x1="663.5" y1="236" x2="663.5" y2="293" stroke="#fff"/>
<path d="M627.2 272L625 283M632 272L628.6 289M636.8 272L633.4 289M640 280L638.2 289" stroke="#c0c0c0" fill="none" stroke-width="0.99"/>
<path d="M666.6 272L664 285M669 284L668 289" stroke="#c0c0c0" fill="none" stroke-width="0.99"/>
<line x1="624" y1="271.5" x2="641" y2="271.5" stroke="#fff"/>
<line x1="663" y1="271.5" x2="670" y2="271.5" stroke="#fff"/>
<line x1="624" y1="289.5" x2="670" y2="289.5" stroke="#fff"/>
<line x1="624" y1="292.5" x2="670" y2="292.5" stroke="#fff"/>
<line x1="624.5" y1="255" x2="624.5" y2="293" stroke="#fff"/>
<line x1="669.5" y1="255" x2="669.5" y2="293" stroke="#fff"/>
<rect x="625" y="293" width="44" height="53" fill="#000"/>
<path d="M625 329L628.62 346M625 305.5L633.62 346M627.34 293L638.62 346M632.34 293L641 333.7M637.34 293L641 310.2" stroke="#c0c0c0" fill="none" stroke-width="0.99"/>
<path d="M664 338.4L665.62 346M664 314.9L669 338.4M664.34 293L669 314.9" stroke="#c0c0c0" fill="none" stroke-width="0.99"/>
<rect x="624.5" y="292.5" width="17" height="54" stroke="#fff" fill="none"/>
<rect x="663.5" y="292.5" width="6" height="54" stroke="#fff" fill="none"/>
<line x1="641" y1="294.5" x2="664" y2="294.5" stroke="#fff"/>
<rect x="641" y="347" width="24" height="65" fill="#000"/>
<line x1="640.5" y1="346" x2="640.5" y2="413" stroke="#fff"/>
<line x1="665.5" y1="346" x2="665.5" y2="413" stroke="#fff"/>
<rect x="632" y="222" width="6" height="68" fill="#000"/>
<rect x="628.5" y="215.5" width="13" height="6" stroke="#fff" fill="none"/>
<line x1="631.5" y1="221" x2="631.5" y2="272" stroke="#fff"/>
<line x1="638.5" y1="221" x2="638.5" y2="272" stroke="#fff"/>
<line x1="632.5" y1="272" x2="632.5" y2="290" stroke="#f0f"/>
<line x1="638.5" y1="272" x2="638.5" y2="290" stroke="#f0f"/>
<line x1="635.5" y1="272" x2="635.5" y2="290" stroke="#f0f"/>
<line x1="632" y1="279.5" x2="639" y2="279.5" stroke="#f0f"/>
<line x1="634.5" y1="211" x2="634.5" y2="297" stroke="#f00" stroke-dasharray="24 2 3 2"/>
<rect x="652" y="227" width="7" height="33" fill="#000"/>
<rect x="650.5" y="221.5" width="11" height="5" stroke="#fff" fill="none" rx="1"/>
<line x1="652.5" y1="226" x2="652.5" y2="260" stroke="#f0f"/>
<line x1="659.5" y1="226" x2="659.5" y2="260" stroke="#f0f"/>
<line x1="653.5" y1="226" x2="653.5" y2="260" stroke="#fff"/>
<line x1="658.5" y1="226" x2="658.5" y2="260" stroke="#fff"/>
<line x1="652.5" y1="259.5" x2="655.5" y2="264.5" stroke="#fff" stroke-width="0.87"/>
<line x1="655.5" y1="264.5" x2="659.5" y2="259.5" stroke="#fff" stroke-width="0.79"/>
<line x1="652" y1="257.5" x2="660" y2="257.5" stroke="#f0f"/>
<line x1="655.5" y1="218" x2="655.5" y2="266" stroke="#f00" stroke-dasharray="4 2"/>
<rect x="615" y="293" width="8" height="27" fill="#000"/>
<line x1="614.5" y1="292" x2="614.5" y2="313" stroke="#fff"/>
<line x1="618.5" y1="294" x2="618.5" y2="323" stroke="#f00"/>
<rect x="614.5" y="315.5" width="9" height="5" stroke="#fff" fill="none"/>
<line x1="471" y1="255.5" x2="490" y2="255.5" stroke="#f0f"/>
<line x1="490" y1="255.5" x2="649" y2="245.5" stroke="#f0f" stroke-width="1.01"/>
<line x1="471" y1="275.5" x2="490" y2="275.5" stroke="#f0f"/>
<line x1="490" y1="275.5" x2="644" y2="282.5" stroke="#f0f" stroke-width="1.01"/>
<rect x="643" y="281" width="3" height="3" fill="#f0f"/>
<line x1="647.5" y1="53" x2="647.5" y2="425" stroke="#f00" stroke-dasharray="33 3 4 3" stroke-dashoffset="12"/>
<line x1="747" y1="152.5" x2="768" y2="152.5" stroke="#0f0"/>
<line x1="747" y1="195.5" x2="758" y2="195.5" stroke="#0f0"/>
<line x1="747" y1="356.5" x2="758" y2="356.5" stroke="#0f0"/>
<line x1="747" y1="412.5" x2="768" y2="412.5" stroke="#0f0"/>
<line x1="755.5" y1="152" x2="755.5" y2="196" stroke="#0f0"/>
<line x1="755.5" y1="356" x2="755.5" y2="413" stroke="#0f0"/>
<line x1="765.5" y1="152" x2="765.5" y2="413" stroke="#0f0"/>
<text x="754" y="174" font-size="7" fill="#0f0" stroke="#0f0" stroke-width="0.2" text-anchor="middle" transform="rotate(-90 754 174)">35</text>
<text x="764" y="282" font-size="7" fill="#0f0" stroke="#0f0" stroke-width="0.2" text-anchor="middle" transform="rotate(-90 764 282)">210</text>
<text x="754" y="385" font-size="7" fill="#0f0" stroke="#0f0" stroke-width="0.2" text-anchor="middle" transform="rotate(-90 754 385)">45</text>
</g>
<g id="plan">
<path d="M138.5 484.5A34 34 0 0 1 172.5 450.5H414.5A34 34 0 0 1 448.5 484.5V680.5A24 24 0 0 1 424.5 704.5H162.5A24 24 0 0 1 138.5 680.5Z" stroke="#fff" fill="none"/>
<path d="M138.5 516.5Q139.5 520.5 142.5 524.5L165.5 555.5Q169.5 561.5 169.5 568.5V704.5" stroke="#fff" fill="none"/>
<path d="M448.5 516.5Q447.5 520.5 444.5 524.5L421.5 555.5Q417.5 561.5 417.5 568.5V704.5" stroke="#fff" fill="none"/>
<circle cx="182" cy="493.5" r="15.5" stroke="#fff" fill="none"/>
<circle cx="405" cy="493.5" r="15.5" stroke="#fff" fill="none"/>
<rect x="194.5" y="524.5" width="198" height="161" stroke="#fff" fill="none"/>
<line x1="293.5" y1="441" x2="293.5" y2="713" stroke="#f00" stroke-dasharray="30 3 5 3"/>
<line x1="163" y1="604.5" x2="424" y2="604.5" stroke="#f00" stroke-dasharray="30 3 5 3"/>
<line x1="156" y1="493.5" x2="428" y2="493.5" stroke="#f00" stroke-dasharray="22 3 5 3"/>
<line x1="181.5" y1="472" x2="181.5" y2="515" stroke="#f00" stroke-dasharray="22 3 5 3"/>
<line x1="404.5" y1="472" x2="404.5" y2="515" stroke="#f00" stroke-dasharray="22 3 5 3"/>
<line x1="218.5" y1="533" x2="218.5" y2="676" stroke="#f00" stroke-dasharray="18 3 4 3"/>
<line x1="367.5" y1="533" x2="367.5" y2="676" stroke="#f00" stroke-dasharray="18 3 4 3"/>
<line x1="204" y1="549.5" x2="384" y2="549.5" stroke="#f00" stroke-dasharray="18 3 4 3"/>
<line x1="204" y1="660.5" x2="384" y2="660.5" stroke="#f00" stroke-dasharray="18 3 4 3"/>
<circle cx="219" cy="549.5" r="4.8" stroke="#f0f" fill="none"/>
<circle cx="218.5" cy="549.5" r="4" stroke="#fff" fill="none"/>
<circle cx="368" cy="549.5" r="4.8" stroke="#f0f" fill="none"/>
<circle cx="367.5" cy="549.5" r="4" stroke="#fff" fill="none"/>
<circle cx="219" cy="660.5" r="4.8" stroke="#f0f" fill="none"/>
<circle cx="218.5" cy="660.5" r="4" stroke="#fff" fill="none"/>
<circle cx="368" cy="660.5" r="4.8" stroke="#f0f" fill="none"/>
<circle cx="367.5" cy="660.5" r="4" stroke="#fff" fill="none"/>
<circle cx="293.5" cy="576.5" r="4" stroke="#fff" fill="none"/>
<line x1="286" y1="576.5" x2="302" y2="576.5" stroke="#f00"/>
<line x1="293.5" y1="569" x2="293.5" y2="585" stroke="#f00"/>
<circle cx="246.5" cy="586.5" r="4" stroke="#fff" fill="none"/>
<line x1="239" y1="586.5" x2="255" y2="586.5" stroke="#f00"/>
<line x1="246.5" y1="579" x2="246.5" y2="595" stroke="#f00"/>
<circle cx="246.5" cy="623.5" r="4" stroke="#fff" fill="none"/>
<line x1="239" y1="623.5" x2="255" y2="623.5" stroke="#f00"/>
<line x1="246.5" y1="616" x2="246.5" y2="632" stroke="#f00"/>
<circle cx="264.5" cy="611.5" r="4" stroke="#fff" fill="none"/>
<line x1="257" y1="611.5" x2="273" y2="611.5" stroke="#f00"/>
<line x1="264.5" y1="604" x2="264.5" y2="620" stroke="#f00"/>
<circle cx="322.5" cy="611.5" r="4" stroke="#fff" fill="none"/>
<line x1="315" y1="611.5" x2="331" y2="611.5" stroke="#f00"/>
<line x1="322.5" y1="604" x2="322.5" y2="620" stroke="#f00"/>
<line x1="246.5" y1="580" x2="246.5" y2="630" stroke="#f00" stroke-dasharray="12 3 3 3"/>
<path d="M254.5 595.5H273.5Q275.5 595.5 275.5 593.5V584.5Q275.5 582.5 277.5 582.5H308.5Q310.5 582.5 310.5 584.5V593.5Q310.5 595.5 312.5 595.5H331.5Q333.5 595.5 333.5 597.5V625.5Q333.5 627.5 331.5 627.5H254.5Q252.5 627.5 252.5 625.5V597.5Q252.5 595.5 254.5 595.5Z" stroke="#fff" fill="none"/>
<path d="M279.5 598.5H283.5Q284.5 598.5 284.5 599.5V604.5Q284.5 606.5 286.5 606.5H299.5Q301.5 606.5 301.5 604.5V599.5Q301.5 598.5 302.5 598.5H307.5Q309.5 598.5 309.5 600.5V619.5Q309.5 621.5 307.5 621.5H279.5Q277.5 621.5 277.5 619.5V600.5Q277.5 598.5 279.5 598.5Z" stroke="#fff" fill="none"/>
<line x1="392" y1="524.5" x2="408" y2="524.5" stroke="#0f0"/>
<line x1="392" y1="685.5" x2="408" y2="685.5" stroke="#0f0"/>
<line x1="405.5" y1="524" x2="405.5" y2="686" stroke="#0f0"/>
<text x="404" y="604" font-size="6.5" fill="#0f0" stroke="#0f0" stroke-width="0.2" text-anchor="middle" transform="rotate(-90 404 604)">120</text>
<line x1="194.5" y1="685" x2="194.5" y2="699" stroke="#0f0"/>
<line x1="392.5" y1="685" x2="392.5" y2="699" stroke="#0f0"/>
<line x1="194" y1="695.5" x2="393" y2="695.5" stroke="#0f0"/>
<text x="293" y="694" font-size="6.5" fill="#0f0" stroke="#0f0" stroke-width="0.2" text-anchor="middle">160</text>
</g>
<g id="flat">
<path d="M527.5 522.5H546.5Q548.5 522.5 548.5 520.5V511.5Q548.5 509.5 550.5 509.5H581.5Q583.5 509.5 583.5 511.5V520.5Q583.5 522.5 585.5 522.5H604.5Q606.5 522.5 606.5 524.5V552.5Q606.5 554.5 604.5 554.5H527.5Q525.5 554.5 525.5 552.5V524.5Q525.5 522.5 527.5 522.5Z" stroke="#fff" fill="none"/>
<path d="M551.5 525.5H557.5V530.5Q557.5 532.5 559.5 532.5H572.5Q574.5 532.5 574.5 530.5V525.5H579.5Q581.5 525.5 581.5 527.5V546.5Q581.5 548.5 579.5 548.5H551.5Q549.5 548.5 549.5 546.5V527.5Q549.5 525.5 551.5 525.5Z" stroke="#fff" fill="none"/>
<circle cx="536.5" cy="538.5" r="4" stroke="#fff" fill="none"/>
<circle cx="594.5" cy="538.5" r="4" stroke="#fff" fill="none"/>
<line x1="530" y1="538.5" x2="545" y2="538.5" stroke="#f00"/>
<line x1="536.5" y1="531" x2="536.5" y2="547" stroke="#f00"/>
<line x1="588" y1="538.5" x2="603" y2="538.5" stroke="#f00"/>
<line x1="594.5" y1="531" x2="594.5" y2="547" stroke="#f00"/>
<line x1="565.5" y1="505" x2="565.5" y2="561" stroke="#f00" stroke-dasharray="14 2 3 2"/>
<line x1="548.5" y1="501" x2="548.5" y2="516" stroke="#0f0"/>
<line x1="583.5" y1="501" x2="583.5" y2="516" stroke="#0f0"/>
<line x1="548" y1="503.5" x2="584" y2="503.5" stroke="#0f0"/>
<text x="566" y="502" font-size="6" fill="#0f0" stroke="#0f0" stroke-width="0.2" text-anchor="middle">35</text>
<line x1="557.5" y1="519" x2="557.5" y2="528" stroke="#0f0"/>
<line x1="574.5" y1="519" x2="574.5" y2="528" stroke="#0f0"/>
<line x1="557" y1="521.5" x2="575" y2="521.5" stroke="#0f0"/>
<text x="566" y="520" font-size="6" fill="#0f0" stroke="#0f0" stroke-width="0.2" text-anchor="middle">14</text>
<line x1="584" y1="509.5" x2="629" y2="509.5" stroke="#0f0"/>
<line x1="603" y1="522.5" x2="621" y2="522.5" stroke="#0f0"/>
<line x1="600" y1="554.5" x2="629" y2="554.5" stroke="#0f0"/>
<line x1="626.5" y1="509" x2="626.5" y2="555" stroke="#0f0"/>
<line x1="618.5" y1="522" x2="618.5" y2="555" stroke="#0f0"/>
<line x1="612.5" y1="538" x2="612.5" y2="555" stroke="#0f0"/>
<line x1="598" y1="538.5" x2="615" y2="538.5" stroke="#0f0"/>
<text x="624" y="531" font-size="6" fill="#0f0" stroke="#0f0" stroke-width="0.2" text-anchor="middle" transform="rotate(-90 624 531)">34.5</text>
<text x="617" y="538" font-size="6" fill="#0f0" stroke="#0f0" stroke-width="0.2" text-anchor="middle" transform="rotate(-90 617 538)">25</text>
<text x="611" y="547" font-size="6" fill="#0f0" stroke="#0f0" stroke-width="0.2" text-anchor="middle" transform="rotate(-90 611 547)">13</text>
<line x1="555.5" y1="527" x2="555.5" y2="549" stroke="#0f0"/>
<text x="554" y="538" font-size="6" fill="#0f0" stroke="#0f0" stroke-width="0.2" text-anchor="middle" transform="rotate(-90 554 538)">8</text>
<line x1="549.5" y1="548" x2="549.5" y2="571" stroke="#0f0"/>
<line x1="582.5" y1="548" x2="582.5" y2="571" stroke="#0f0"/>
<line x1="549" y1="567.5" x2="583" y2="567.5" stroke="#0f0"/>
<text x="566" y="566" font-size="6" fill="#0f0" stroke="#0f0" stroke-width="0.2" text-anchor="middle">26</text>
<line x1="536.5" y1="543" x2="536.5" y2="578" stroke="#0f0"/>
<line x1="594.5" y1="543" x2="594.5" y2="578" stroke="#0f0"/>
<line x1="536" y1="575.5" x2="595" y2="575.5" stroke="#0f0"/>
<text x="566" y="574" font-size="6" fill="#0f0" stroke="#0f0" stroke-width="0.2" text-anchor="middle">47</text>
<line x1="525.5" y1="554" x2="525.5" y2="585" stroke="#0f0"/>
<line x1="606.5" y1="554" x2="606.5" y2="585" stroke="#0f0"/>
<line x1="525" y1="581.5" x2="607" y2="581.5" stroke="#0f0"/>
<text x="566" y="580" font-size="6" fill="#0f0" stroke="#0f0" stroke-width="0.2" text-anchor="middle">65</text>
<text x="504" y="535" font-size="6" fill="#0f0" stroke="#0f0" stroke-width="0.2">2-Ø6</text>
<line x1="504.5" y1="536.5" x2="519.5" y2="536.5" stroke="#0f0"/>
<line x1="519.5" y1="536.5" x2="546.5" y2="539.5" stroke="#0f0" stroke-width="1"/>
<text x="570.5" y="599" font-size="10.5" fill="#f0f" stroke="#f0f" stroke-width="0.2" text-anchor="middle">展开尺寸</text>
</g>
<g id="strip">
<line x1="669.5" y1="615.5" x2="669.5" y2="504.5" stroke="#fff"/>
<line x1="669.5" y1="504.5" x2="754.5" y2="504.5" stroke="#fff"/>
<line x1="754.5" y1="504.5" x2="754.5" y2="615.5" stroke="#fff"/>
<path d="M673.5 519.5H692.5Q694.5 519.5 694.5 517.5V509.5Q694.5 507.5 696.5 507.5H727.5Q729.5 507.5 729.5 509.5V517.5Q729.5 519.5 731.5 519.5H750.5Q752.5 519.5 752.5 521.5V550.5Q752.5 552.5 750.5 552.5H673.5Q671.5 552.5 671.5 550.5V521.5Q671.5 519.5 673.5 519.5Z" stroke="#fff" fill="none"/>
<path d="M697.5 523.5H703.5V528.5Q703.5 530.5 705.5 530.5H718.5Q720.5 530.5 720.5 528.5V523.5H726.5Q728.5 523.5 728.5 525.5V543.5Q728.5 545.5 726.5 545.5H697.5Q695.5 545.5 695.5 543.5V525.5Q695.5 523.5 697.5 523.5Z" stroke="#fff" fill="none"/>
<circle cx="682.5" cy="535.5" r="4" stroke="#fff" fill="none"/>
<line x1="677" y1="535.5" x2="688" y2="535.5" stroke="#f00"/>
<line x1="682.5" y1="530" x2="682.5" y2="542" stroke="#f00"/>
<circle cx="741.5" cy="535.5" r="4" stroke="#fff" fill="none"/>
<line x1="736" y1="535.5" x2="747" y2="535.5" stroke="#f00"/>
<line x1="741.5" y1="530" x2="741.5" y2="542" stroke="#f00"/>
<path d="M673.5 566.5H692.5Q694.5 566.5 694.5 564.5V556.5Q694.5 554.5 696.5 554.5H727.5Q729.5 554.5 729.5 556.5V564.5Q729.5 566.5 731.5 566.5H750.5Q752.5 566.5 752.5 568.5V597.5Q752.5 599.5 750.5 599.5H673.5Q671.5 599.5 671.5 597.5V568.5Q671.5 566.5 673.5 566.5Z" stroke="#fff" fill="none"/>
<path d="M697.5 570.5H703.5V575.5Q703.5 577.5 705.5 577.5H718.5Q720.5 577.5 720.5 575.5V570.5H726.5Q728.5 570.5 728.5 572.5V590.5Q728.5 592.5 726.5 592.5H697.5Q695.5 592.5 695.5 590.5V572.5Q695.5 570.5 697.5 570.5Z" stroke="#fff" fill="none"/>
<circle cx="682.5" cy="582.5" r="4" stroke="#fff" fill="none"/>
<line x1="677" y1="582.5" x2="688" y2="582.5" stroke="#f00"/>
<line x1="682.5" y1="577" x2="682.5" y2="589" stroke="#f00"/>
<circle cx="741.5" cy="582.5" r="4" stroke="#fff" fill="none"/>
<line x1="736" y1="582.5" x2="747" y2="582.5" stroke="#f00"/>
<line x1="741.5" y1="577" x2="741.5" y2="589" stroke="#f00"/>
<line x1="712.5" y1="503" x2="712.5" y2="632" stroke="#f00" stroke-dasharray="30 2 4 2"/>
<path d="M668 615Q678 622 692 621Q704 620 714 617.5Q724 616 735 619Q745 621.5 757 618" stroke="#f0f" fill="none"/>
<line x1="669.5" y1="615" x2="669.5" y2="635" stroke="#0f0"/>
<line x1="754.5" y1="615" x2="754.5" y2="635" stroke="#0f0"/>
<line x1="669" y1="631.5" x2="755" y2="631.5" stroke="#0f0"/>
<text x="712" y="631" font-size="6.5" fill="#0f0" stroke="#0f0" stroke-width="0.2" text-anchor="middle">69</text>
<line x1="723" y1="553.5" x2="765" y2="553.5" stroke="#0f0"/>
<line x1="761.5" y1="545" x2="761.5" y2="561" stroke="#0f0"/>
<text x="760" y="553" font-size="5" fill="#0f0" stroke="#0f0" stroke-width="0.2" text-anchor="middle" transform="rotate(-90 760 553)">2</text>
<line x1="753.5" y1="592" x2="753.5" y2="611" stroke="#0f0"/>
<line x1="746" y1="607.5" x2="767" y2="607.5" stroke="#0f0"/>
<text x="761" y="606" font-size="6.5" fill="#0f0" stroke="#0f0" stroke-width="0.2">2</text>
<text x="713" y="655" font-size="10.5" fill="#f0f" stroke="#f0f" stroke-width="0.2" text-anchor="middle">排样图</text>
</g>
<g id="notes">
<text x="825.5" y="323.5" font-size="8.8" fill="#f0f" stroke="#f0f" stroke-width="0.3">技术要求:</text>
<text x="825.5" y="334.8" font-size="8.8" fill="#f0f" stroke="#f0f" stroke-width="0.3">1、安装模具之前检测模具零件是否符合图</text>
<text x="825.5" y="346.1" font-size="8.8" fill="#f0f" stroke="#f0f" stroke-width="0.3">纸;</text>
<text x="825.5" y="357.4" font-size="8.8" fill="#f0f" stroke="#f0f" stroke-width="0.3">2、按结构图装配模具，保证凸模与凹模之</text>
<text x="825.5" y="368.7" font-size="8.8" fill="#f0f" stroke="#f0f" stroke-width="0.3">间间隙均匀;</text>
<text x="825.5" y="380" font-size="8.8" fill="#f0f" stroke="#f0f" stroke-width="0.3">3、选用20#标准模架;</text>
<text x="825.5" y="391.3" font-size="8.8" fill="#f0f" stroke="#f0f" stroke-width="0.3">4、选用40T冲床调试模具</text>
</g>
<g id="table">
<text x="822.5" y="437.95" font-size="7.8" fill="#f0f" stroke="#f0f" stroke-width="0.2" text-anchor="middle">26</text>
<text x="888.5" y="437.45" font-size="6" fill="#f0f" stroke="#f0f" stroke-width="0.25" text-anchor="middle">圆柱销</text>
<text x="920" y="437.95" font-size="7.8" fill="#f0f" stroke="#f0f" stroke-width="0.2" text-anchor="middle">2</text>
<text x="1036" y="436.95" font-size="5.2" fill="#f0f" stroke="#f0f" stroke-width="0.2" text-anchor="end">Φ10X30 GB/T119.1-2000</text>
<text x="822.5" y="446.6" font-size="7.8" fill="#f0f" stroke="#f0f" stroke-width="0.2" text-anchor="middle">25</text>
<text x="888.5" y="446.1" font-size="6" fill="#f0f" stroke="#f0f" stroke-width="0.25" text-anchor="middle">内六角螺钉</text>
<text x="920" y="446.6" font-size="7.8" fill="#f0f" stroke="#f0f" stroke-width="0.2" text-anchor="middle">4</text>
<text x="1036" y="445.6" font-size="5.2" fill="#f0f" stroke="#f0f" stroke-width="0.2" text-anchor="end">M10X50 GB/T70.1-2000</text>
<text x="822.5" y="455.25" font-size="7.8" fill="#f0f" stroke="#f0f" stroke-width="0.2" text-anchor="middle">24</text>
<text x="847.5" y="454.25" font-size="7" fill="#f0f" stroke="#f0f" stroke-width="0.2" text-anchor="middle">016</text>
<text x="888.5" y="454.75" font-size="6" fill="#f0f" stroke="#f0f" stroke-width="0.25" text-anchor="middle">垫料板</text>
<text x="920" y="455.25" font-size="7.8" fill="#f0f" stroke="#f0f" stroke-width="0.2" text-anchor="middle">1</text>
<text x="951" y="454.75" font-size="7" fill="#f0f" stroke="#f0f" stroke-width="0.2" text-anchor="middle">45#</text>
<text x="822.5" y="463.9" font-size="7.8" fill="#f0f" stroke="#f0f" stroke-width="0.2" text-anchor="middle">23</text>
<text x="847.5" y="462.9" font-size="7" fill="#f0f" stroke="#f0f" stroke-width="0.2" text-anchor="middle">015</text>
<text x="888.5" y="463.4" font-size="6" fill="#f0f" stroke="#f0f" stroke-width="0.25" text-anchor="middle">圆孔冲头</text>
<text x="920" y="463.9" font-size="7.8" fill="#f0f" stroke="#f0f" stroke-width="0.2" text-anchor="middle">1</text>
<text x="951" y="463.4" font-size="7" fill="#f0f" stroke="#f0f" stroke-width="0.2" text-anchor="middle">Cr12MoV</text>
<text x="822.5" y="472.55" font-size="7.8" fill="#f0f" stroke="#f0f" stroke-width="0.2" text-anchor="middle">22</text>
<text x="888.5" y="472.05" font-size="6" fill="#f0f" stroke="#f0f" stroke-width="0.25" text-anchor="middle">内六角螺钉</text>
<text x="920" y="472.55" font-size="7.8" fill="#f0f" stroke="#f0f" stroke-width="0.2" text-anchor="middle">4</text>
<text x="1036" y="471.55" font-size="5.2" fill="#f0f" stroke="#f0f" stroke-width="0.2" text-anchor="end">M8X40 GB/T70.1-2000</text>
<text x="822.5" y="481.2" font-size="7.8" fill="#f0f" stroke="#f0f" stroke-width="0.2" text-anchor="middle">21</text>
<text x="888.5" y="480.7" font-size="6" fill="#f0f" stroke="#f0f" stroke-width="0.25" text-anchor="middle">圆柱销</text>
<text x="920" y="481.2" font-size="7.8" fill="#f0f" stroke="#f0f" stroke-width="0.2" text-anchor="middle">2</text>
<text x="1036" y="480.2" font-size="5.2" fill="#f0f" stroke="#f0f" stroke-width="0.2" text-anchor="end">Φ10X80 GB/T119.1-2000</text>
<text x="822.5" y="489.85" font-size="7.8" fill="#f0f" stroke="#f0f" stroke-width="0.2" text-anchor="middle">20</text>
<text x="888.5" y="489.35" font-size="6" fill="#f0f" stroke="#f0f" stroke-width="0.25" text-anchor="middle">内六角螺钉</text>
<text x="920" y="489.85" font-size="7.8" fill="#f0f" stroke="#f0f" stroke-width="0.2" text-anchor="middle">4</text>
<text x="1036" y="488.85" font-size="5.2" fill="#f0f" stroke="#f0f" stroke-width="0.2" text-anchor="end">M10X80 GB/T70.1-2000</text>
<text x="822.5" y="498.5" font-size="7.8" fill="#f0f" stroke="#f0f" stroke-width="0.2" text-anchor="middle">19</text>
<text x="888.5" y="498" font-size="6" fill="#f0f" stroke="#f0f" stroke-width="0.25" text-anchor="middle">卸料螺钉</text>
<text x="920" y="498.5" font-size="7.8" fill="#f0f" stroke="#f0f" stroke-width="0.2" text-anchor="middle">3</text>
<text x="1036" y="497.5" font-size="5.2" fill="#f0f" stroke="#f0f" stroke-width="0.2" text-anchor="end">M8X40 GB/T72.1-2000</text>
<text x="822.5" y="507.15" font-size="7.8" fill="#f0f" stroke="#f0f" stroke-width="0.2" text-anchor="middle">18</text>
<text x="888.5" y="506.65" font-size="6" fill="#f0f" stroke="#f0f" stroke-width="0.25" text-anchor="middle">防转销</text>
<text x="920" y="507.15" font-size="7.8" fill="#f0f" stroke="#f0f" stroke-width="0.2" text-anchor="middle">1</text>
<text x="1036" y="506.15" font-size="5.2" fill="#f0f" stroke="#f0f" stroke-width="0.2" text-anchor="end">Φ6X10 GB/T119.1-2000</text>
<text x="822.5" y="515.8" font-size="7.8" fill="#f0f" stroke="#f0f" stroke-width="0.2" text-anchor="middle">17</text>
<text x="847.5" y="514.8" font-size="7" fill="#f0f" stroke="#f0f" stroke-width="0.2" text-anchor="middle">014</text>
<text x="888.5" y="515.3" font-size="6" fill="#f0f" stroke="#f0f" stroke-width="0.25" text-anchor="middle">打料杆</text>
<text x="920" y="515.8" font-size="7.8" fill="#f0f" stroke="#f0f" stroke-width="0.2" text-anchor="middle">1</text>
<text x="951" y="515.3" font-size="7" fill="#f0f" stroke="#f0f" stroke-width="0.2" text-anchor="middle">Q235</text>
<text x="822.5" y="524.45" font-size="7.8" fill="#f0f" stroke="#f0f" stroke-width="0.2" text-anchor="middle">16</text>
<text x="888.5" y="523.95" font-size="6" fill="#f0f" stroke="#f0f" stroke-width="0.25" text-anchor="middle">模　柄</text>
<text x="920" y="524.45" font-size="7.8" fill="#f0f" stroke="#f0f" stroke-width="0.2" text-anchor="middle">1</text>
<text x="822.5" y="533.1" font-size="7.8" fill="#f0f" stroke="#f0f" stroke-width="0.2" text-anchor="middle">15</text>
<text x="847.5" y="532.1" font-size="7" fill="#f0f" stroke="#f0f" stroke-width="0.2" text-anchor="middle">013</text>
<text x="888.5" y="532.6" font-size="6" fill="#f0f" stroke="#f0f" stroke-width="0.25" text-anchor="middle">打料板</text>
<text x="920" y="533.1" font-size="7.8" fill="#f0f" stroke="#f0f" stroke-width="0.2" text-anchor="middle">1</text>
<text x="951" y="532.6" font-size="7" fill="#f0f" stroke="#f0f" stroke-width="0.2" text-anchor="middle">Q235</text>
<text x="822.5" y="541.75" font-size="7.8" fill="#f0f" stroke="#f0f" stroke-width="0.2" text-anchor="middle">14</text>
<text x="847.5" y="540.75" font-size="7" fill="#f0f" stroke="#f0f" stroke-width="0.2" text-anchor="middle">012</text>
<text x="888.5" y="541.25" font-size="6" fill="#f0f" stroke="#f0f" stroke-width="0.25" text-anchor="middle">上模座</text>
<text x="920" y="541.75" font-size="7.8" fill="#f0f" stroke="#f0f" stroke-width="0.2" text-anchor="middle">1</text>
<text x="951" y="541.25" font-size="7" fill="#f0f" stroke="#f0f" stroke-width="0.2" text-anchor="middle">HT200</text>
<text x="1008.5" y="541.25" font-size="5.6" fill="#f0f" stroke="#f0f" stroke-width="0.2" text-anchor="middle">20#后侧导柱模架</text>
<text x="822.5" y="550.4" font-size="7.8" fill="#f0f" stroke="#f0f" stroke-width="0.2" text-anchor="middle">13</text>
<text x="847.5" y="549.4" font-size="7" fill="#f0f" stroke="#f0f" stroke-width="0.2" text-anchor="middle">011</text>
<text x="888.5" y="549.9" font-size="6" fill="#f0f" stroke="#f0f" stroke-width="0.25" text-anchor="middle">上垫板2</text>
<text x="920" y="550.4" font-size="7.8" fill="#f0f" stroke="#f0f" stroke-width="0.2" text-anchor="middle">1</text>
<text x="951" y="549.9" font-size="7" fill="#f0f" stroke="#f0f" stroke-width="0.2" text-anchor="middle">45#</text>
<text x="822.5" y="559.05" font-size="7.8" fill="#f0f" stroke="#f0f" stroke-width="0.2" text-anchor="middle">12</text>
<text x="847.5" y="558.05" font-size="7" fill="#f0f" stroke="#f0f" stroke-width="0.2" text-anchor="middle">010</text>
<text x="888.5" y="558.55" font-size="6" fill="#f0f" stroke="#f0f" stroke-width="0.25" text-anchor="middle">上垫板1</text>
<text x="920" y="559.05" font-size="7.8" fill="#f0f" stroke="#f0f" stroke-width="0.2" text-anchor="middle">1</text>
<text x="951" y="558.55" font-size="7" fill="#f0f" stroke="#f0f" stroke-width="0.2" text-anchor="middle">45#</text>
<text x="822.5" y="567.7" font-size="7.8" fill="#f0f" stroke="#f0f" stroke-width="0.2" text-anchor="middle">11</text>
<text x="847.5" y="566.7" font-size="7" fill="#f0f" stroke="#f0f" stroke-width="0.2" text-anchor="middle">009</text>
<text x="888.5" y="567.2" font-size="6" fill="#f0f" stroke="#f0f" stroke-width="0.25" text-anchor="middle">冲头固定板</text>
<text x="920" y="567.7" font-size="7.8" fill="#f0f" stroke="#f0f" stroke-width="0.2" text-anchor="middle">1</text>
<text x="951" y="567.2" font-size="7" fill="#f0f" stroke="#f0f" stroke-width="0.2" text-anchor="middle">45#</text>
<text x="822.5" y="576.35" font-size="7.8" fill="#f0f" stroke="#f0f" stroke-width="0.2" text-anchor="middle">10</text>
<text x="847.5" y="575.35" font-size="7" fill="#f0f" stroke="#f0f" stroke-width="0.2" text-anchor="middle">008</text>
<text x="888.5" y="575.85" font-size="6" fill="#f0f" stroke="#f0f" stroke-width="0.25" text-anchor="middle">凹　模</text>
<text x="920" y="576.35" font-size="7.8" fill="#f0f" stroke="#f0f" stroke-width="0.2" text-anchor="middle">1</text>
<text x="951" y="575.85" font-size="7" fill="#f0f" stroke="#f0f" stroke-width="0.2" text-anchor="middle">Cr12MoV</text>
<text x="822.5" y="585" font-size="7.8" fill="#f0f" stroke="#f0f" stroke-width="0.2" text-anchor="middle">9</text>
<text x="847.5" y="584" font-size="7" fill="#f0f" stroke="#f0f" stroke-width="0.2" text-anchor="middle">007</text>
<text x="888.5" y="584.5" font-size="6" fill="#f0f" stroke="#f0f" stroke-width="0.25" text-anchor="middle">圆孔冲头</text>
<text x="920" y="585" font-size="7.8" fill="#f0f" stroke="#f0f" stroke-width="0.2" text-anchor="middle">1</text>
<text x="951" y="584.5" font-size="7" fill="#f0f" stroke="#f0f" stroke-width="0.2" text-anchor="middle">Cr12MoV</text>
<text x="822.5" y="593.65" font-size="7.8" fill="#f0f" stroke="#f0f" stroke-width="0.2" text-anchor="middle">8</text>
<text x="847.5" y="592.65" font-size="7" fill="#f0f" stroke="#f0f" stroke-width="0.2" text-anchor="middle">006</text>
<text x="888.5" y="593.15" font-size="6" fill="#f0f" stroke="#f0f" stroke-width="0.25" text-anchor="middle">卸料板</text>
<text x="920" y="593.65" font-size="7.8" fill="#f0f" stroke="#f0f" stroke-width="0.2" text-anchor="middle">1</text>
<text x="951" y="593.15" font-size="7" fill="#f0f" stroke="#f0f" stroke-width="0.2" text-anchor="middle">45#</text>
<text x="822.5" y="602.3" font-size="7.8" fill="#f0f" stroke="#f0f" stroke-width="0.2" text-anchor="middle">7</text>
<text x="847.5" y="601.3" font-size="7" fill="#f0f" stroke="#f0f" stroke-width="0.2" text-anchor="middle">005</text>
<text x="888.5" y="601.8" font-size="6" fill="#f0f" stroke="#f0f" stroke-width="0.25" text-anchor="middle">定位销</text>
<text x="920" y="602.3" font-size="7.8" fill="#f0f" stroke="#f0f" stroke-width="0.2" text-anchor="middle">3</text>
<text x="951" y="601.8" font-size="7" fill="#f0f" stroke="#f0f" stroke-width="0.2" text-anchor="middle">45#</text>
<text x="822.5" y="610.95" font-size="7.8" fill="#f0f" stroke="#f0f" stroke-width="0.2" text-anchor="middle">6</text>
<text x="847.5" y="609.95" font-size="7" fill="#f0f" stroke="#f0f" stroke-width="0.2" text-anchor="middle">004</text>
<text x="888.5" y="610.45" font-size="6" fill="#f0f" stroke="#f0f" stroke-width="0.25" text-anchor="middle">凸凹模</text>
<text x="920" y="610.95" font-size="7.8" fill="#f0f" stroke="#f0f" stroke-width="0.2" text-anchor="middle">1</text>
<text x="951" y="610.45" font-size="7" fill="#f0f" stroke="#f0f" stroke-width="0.2" text-anchor="middle">Cr12MoV</text>
<text x="822.5" y="619.6" font-size="7.8" fill="#f0f" stroke="#f0f" stroke-width="0.2" text-anchor="middle">5</text>
<text x="888.5" y="619.1" font-size="6" fill="#f0f" stroke="#f0f" stroke-width="0.25" text-anchor="middle">橡　胶</text>
<text x="822.5" y="628.25" font-size="7.8" fill="#f0f" stroke="#f0f" stroke-width="0.2" text-anchor="middle">4</text>
<text x="847.5" y="627.25" font-size="7" fill="#f0f" stroke="#f0f" stroke-width="0.2" text-anchor="middle">003</text>
<text x="888.5" y="627.75" font-size="6" fill="#f0f" stroke="#f0f" stroke-width="0.25" text-anchor="middle">凸凹模固定板</text>
<text x="920" y="628.25" font-size="7.8" fill="#f0f" stroke="#f0f" stroke-width="0.2" text-anchor="middle">1</text>
<text x="951" y="627.75" font-size="7" fill="#f0f" stroke="#f0f" stroke-width="0.2" text-anchor="middle">45#</text>
<text x="822.5" y="636.9" font-size="7.8" fill="#f0f" stroke="#f0f" stroke-width="0.2" text-anchor="middle">3</text>
<text x="847.5" y="635.9" font-size="7" fill="#f0f" stroke="#f0f" stroke-width="0.2" text-anchor="middle">002</text>
<text x="888.5" y="636.4" font-size="6" fill="#f0f" stroke="#f0f" stroke-width="0.25" text-anchor="middle">下垫板</text>
<text x="920" y="636.9" font-size="7.8" fill="#f0f" stroke="#f0f" stroke-width="0.2" text-anchor="middle">1</text>
<text x="951" y="636.4" font-size="7" fill="#f0f" stroke="#f0f" stroke-width="0.2" text-anchor="middle">45#</text>
<text x="822.5" y="645.55" font-size="7.8" fill="#f0f" stroke="#f0f" stroke-width="0.2" text-anchor="middle">2</text>
<text x="888.5" y="645.05" font-size="6" fill="#f0f" stroke="#f0f" stroke-width="0.25" text-anchor="middle">卸料螺钉</text>
<text x="920" y="645.55" font-size="7.8" fill="#f0f" stroke="#f0f" stroke-width="0.2" text-anchor="middle">4</text>
<text x="1036" y="644.55" font-size="5.2" fill="#f0f" stroke="#f0f" stroke-width="0.2" text-anchor="end">M8X60 GB/T72.1-2000</text>
<text x="822.5" y="654.2" font-size="7.8" fill="#f0f" stroke="#f0f" stroke-width="0.2" text-anchor="middle">1</text>
<text x="847.5" y="653.2" font-size="7" fill="#f0f" stroke="#f0f" stroke-width="0.2" text-anchor="middle">001</text>
<text x="888.5" y="653.7" font-size="6" fill="#f0f" stroke="#f0f" stroke-width="0.25" text-anchor="middle">下模座</text>
<text x="920" y="654.2" font-size="7.8" fill="#f0f" stroke="#f0f" stroke-width="0.2" text-anchor="middle">1</text>
<text x="951" y="653.7" font-size="7" fill="#f0f" stroke="#f0f" stroke-width="0.2" text-anchor="middle">HT200</text>
<text x="1008.5" y="653.7" font-size="5.6" fill="#f0f" stroke="#f0f" stroke-width="0.2" text-anchor="middle">20#后侧导柱模架</text>
<line x1="816" y1="431.5" x2="1040" y2="431.5" stroke="#f0f"/>
<line x1="816" y1="438.5" x2="1040" y2="438.5" stroke="#f0f"/>
<line x1="816" y1="447.5" x2="1040" y2="447.5" stroke="#f0f"/>
<line x1="816" y1="456.5" x2="1040" y2="456.5" stroke="#f0f"/>
<line x1="816" y1="464.5" x2="1040" y2="464.5" stroke="#f0f"/>
<line x1="816" y1="473.5" x2="1040" y2="473.5" stroke="#f0f"/>
<line x1="816" y1="482.5" x2="1040" y2="482.5" stroke="#f0f"/>
<line x1="816" y1="490.5" x2="1040" y2="490.5" stroke="#f0f"/>
<line x1="816" y1="499.5" x2="1040" y2="499.5" stroke="#f0f"/>
<line x1="816" y1="508.5" x2="1040" y2="508.5" stroke="#f0f"/>
<line x1="816" y1="516.5" x2="1040" y2="516.5" stroke="#f0f"/>
<line x1="816" y1="525.5" x2="1040" y2="525.5" stroke="#f0f"/>
<line x1="816" y1="534.5" x2="1040" y2="534.5" stroke="#f0f"/>
<line x1="816" y1="542.5" x2="1040" y2="542.5" stroke="#f0f"/>
<line x1="816" y1="551.5" x2="1040" y2="551.5" stroke="#f0f"/>
<line x1="816" y1="560.5" x2="1040" y2="560.5" stroke="#f0f"/>
<line x1="816" y1="568.5" x2="1040" y2="568.5" stroke="#f0f"/>
<line x1="816" y1="577.5" x2="1040" y2="577.5" stroke="#f0f"/>
<line x1="816" y1="586.5" x2="1040" y2="586.5" stroke="#f0f"/>
<line x1="816" y1="594.5" x2="1040" y2="594.5" stroke="#f0f"/>
<line x1="816" y1="603.5" x2="1040" y2="603.5" stroke="#f0f"/>
<line x1="816" y1="611.5" x2="1040" y2="611.5" stroke="#f0f"/>
<line x1="816" y1="620.5" x2="1040" y2="620.5" stroke="#f0f"/>
<line x1="816" y1="629.5" x2="1040" y2="629.5" stroke="#f0f"/>
<line x1="816" y1="637.5" x2="1040" y2="637.5" stroke="#f0f"/>
<line x1="816" y1="646.5" x2="1040" y2="646.5" stroke="#f0f"/>
<line x1="816" y1="655.5" x2="1040" y2="655.5" stroke="#f0f"/>
<line x1="816.5" y1="431" x2="816.5" y2="673" stroke="#fff"/>
<line x1="828.5" y1="431" x2="828.5" y2="673" stroke="#fff"/>
<line x1="866.5" y1="431" x2="866.5" y2="673" stroke="#fff"/>
<line x1="915.5" y1="431" x2="915.5" y2="673" stroke="#fff"/>
<line x1="924.5" y1="431" x2="924.5" y2="673" stroke="#fff"/>
<line x1="977.5" y1="431" x2="977.5" y2="673" stroke="#fff"/>
<line x1="1039.5" y1="431" x2="1039.5" y2="673" stroke="#fff"/>
<line x1="816" y1="431.5" x2="1040" y2="431.5" stroke="#fff"/>
<text x="822.5" y="662.5" font-size="5.5" fill="#0f0" stroke="#0f0" stroke-width="0.2" text-anchor="middle">序</text>
<text x="822.5" y="669.5" font-size="5.5" fill="#0f0" stroke="#0f0" stroke-width="0.2" text-anchor="middle">号</text>
<text x="836" y="667" font-size="6" fill="#0f0" stroke="#0f0" stroke-width="0.2" text-anchor="middle">代</text>
<text x="858" y="667" font-size="6" fill="#0f0" stroke="#0f0" stroke-width="0.2" text-anchor="middle">号</text>
<text x="880" y="666" font-size="6" fill="#0f0" stroke="#0f0" stroke-width="0.2" text-anchor="middle">名</text>
<text x="902" y="666" font-size="6" fill="#0f0" stroke="#0f0" stroke-width="0.2" text-anchor="middle">称</text>
<text x="920" y="662.5" font-size="5.5" fill="#0f0" stroke="#0f0" stroke-width="0.2" text-anchor="middle">数</text>
<text x="920" y="669.5" font-size="5.5" fill="#0f0" stroke="#0f0" stroke-width="0.2" text-anchor="middle">量</text>
<text x="942" y="667" font-size="6" fill="#0f0" stroke="#0f0" stroke-width="0.2" text-anchor="middle">材</text>
<text x="955" y="667" font-size="6" fill="#0f0" stroke="#0f0" stroke-width="0.2" text-anchor="middle">料</text>
<text x="998" y="666" font-size="6" fill="#0f0" stroke="#0f0" stroke-width="0.2" text-anchor="middle">备</text>
<text x="1016" y="666" font-size="6" fill="#0f0" stroke="#0f0" stroke-width="0.2" text-anchor="middle">注</text>
<line x1="816" y1="672.5" x2="1040" y2="672.5" stroke="#fff"/>
<line x1="816.5" y1="672" x2="816.5" y2="743" stroke="#fff"/>
<line x1="915.5" y1="672" x2="915.5" y2="743" stroke="#fff"/>
<line x1="977.5" y1="672" x2="977.5" y2="743" stroke="#fff"/>
<line x1="816" y1="707.5" x2="978" y2="707.5" stroke="#fff"/>
<line x1="977" y1="695.5" x2="1040" y2="695.5" stroke="#fff"/>
<line x1="977" y1="719.5" x2="1040" y2="719.5" stroke="#fff"/>
<line x1="915" y1="731.5" x2="978" y2="731.5" stroke="#fff"/>
<line x1="816" y1="681.5" x2="916" y2="681.5" stroke="#f0f"/>
<line x1="816" y1="690.5" x2="916" y2="690.5" stroke="#f0f"/>
<line x1="816" y1="698.5" x2="916" y2="698.5" stroke="#f0f"/>
<line x1="816" y1="716.5" x2="916" y2="716.5" stroke="#f0f"/>
<line x1="816" y1="724.5" x2="916" y2="724.5" stroke="#f0f"/>
<line x1="816" y1="733.5" x2="916" y2="733.5" stroke="#f0f"/>
<line x1="828.5" y1="672" x2="828.5" y2="708" stroke="#f0f"/>
<line x1="841.5" y1="672" x2="841.5" y2="708" stroke="#f0f"/>
<line x1="856.5" y1="672" x2="856.5" y2="708" stroke="#f0f"/>
<line x1="880.5" y1="672" x2="880.5" y2="708" stroke="#f0f"/>
<line x1="895.5" y1="672" x2="895.5" y2="708" stroke="#f0f"/>
<line x1="831.5" y1="707" x2="831.5" y2="743" stroke="#f0f"/>
<line x1="846.5" y1="707" x2="846.5" y2="743" stroke="#f0f"/>
<line x1="865.5" y1="707" x2="865.5" y2="743" stroke="#f0f"/>
<line x1="880.5" y1="707" x2="880.5" y2="743" stroke="#f0f"/>
<line x1="895.5" y1="707" x2="895.5" y2="743" stroke="#f0f"/>
<line x1="915" y1="719.5" x2="978" y2="719.5" stroke="#f0f"/>
<line x1="947.5" y1="707" x2="947.5" y2="732" stroke="#f0f"/>
<line x1="962.5" y1="707" x2="962.5" y2="732" stroke="#f0f"/>
<line x1="923.5" y1="719" x2="923.5" y2="732" stroke="#f0f"/>
<line x1="931.5" y1="719" x2="931.5" y2="732" stroke="#f0f"/>
<line x1="939.5" y1="719" x2="939.5" y2="732" stroke="#f0f"/>
<rect x="817" y="701" width="11" height="5" fill="#0f0"/>
<rect x="830" y="701" width="10" height="5" fill="#0f0"/>
<rect x="844" y="701" width="10" height="5" fill="#0f0"/>
<rect x="857" y="701" width="23" height="5" fill="#0f0"/>
<rect x="896" y="701" width="15" height="5" fill="#0f0"/>
<rect x="818" y="710" width="11" height="5" fill="#0f0"/>
<rect x="866" y="710" width="16" height="5" fill="#0f0"/>
<rect x="869" y="718" width="10" height="5" fill="#0f0"/>
<rect x="818" y="727" width="11" height="5" fill="#0f0"/>
<rect x="869" y="727" width="10" height="5" fill="#0f0"/>
<rect x="869" y="735" width="10" height="5" fill="#0f0"/>
<text x="888" y="706" font-size="4.5" fill="#0f0" stroke="#0f0" stroke-width="0.2" text-anchor="middle">签名</text>
<text x="823" y="740" font-size="5" fill="#0f0" stroke="#0f0" stroke-width="0.2" text-anchor="middle">工艺</text>
<text x="946" y="691.5" font-size="8.8" fill="#f0f" stroke="#f0f" stroke-width="0.2" text-anchor="middle" textLength="58" lengthAdjust="spacingAndGlyphs">Q235A T=1.0</text>
<text x="918" y="715.5" font-size="5" fill="#0f0" stroke="#0f0" stroke-width="0.2">阶段 标记</text>
<text x="955" y="715.5" font-size="5" fill="#0f0" stroke="#0f0" stroke-width="0.2" text-anchor="middle">重量</text>
<text x="969.5" y="715.5" font-size="5" fill="#0f0" stroke="#0f0" stroke-width="0.2" text-anchor="middle">比例</text>
<text x="969.5" y="729" font-size="6.5" fill="#0f0" stroke="#0f0" stroke-width="0.2" text-anchor="middle">1:1</text>
<text x="920" y="739.5" font-size="5" fill="#0f0" stroke="#0f0" stroke-width="0.2">共</text>
<text x="927.5" y="739.5" font-size="6.5" fill="#0f0" stroke="#0f0" stroke-width="0.2">17</text>
<text x="935" y="739.5" font-size="5" fill="#0f0" stroke="#0f0" stroke-width="0.2">张</text>
<text x="949.5" y="739.5" font-size="5" fill="#0f0" stroke="#0f0" stroke-width="0.2">第</text>
<text x="954.5" y="739.5" font-size="6.5" fill="#0f0" stroke="#0f0" stroke-width="0.2">01</text>
<text x="965" y="739.5" font-size="5" fill="#0f0" stroke="#0f0" stroke-width="0.2">张</text>
<text x="1008" y="711" font-size="5.8" fill="#f0f" stroke="#f0f" stroke-width="0.2" text-anchor="middle">级进模落料冲孔复合图</text>
<text x="1008" y="734" font-size="9.5" fill="#f0f" stroke="#f0f" stroke-width="0.2" text-anchor="middle">000</text>
</g>
<g id="frame">
<line x1="42.5" y1="31" x2="42.5" y2="743" stroke="#fff"/>
<line x1="42" y1="31.5" x2="1040" y2="31.5" stroke="#fff"/>
<line x1="1039.5" y1="31" x2="1039.5" y2="743" stroke="#fff"/>
<line x1="42" y1="41.5" x2="105" y2="41.5" stroke="#fff"/>
<line x1="104.5" y1="31" x2="104.5" y2="42" stroke="#fff"/>
<line x1="11.5" y1="20" x2="11.5" y2="743" stroke="#f0f"/>
<line x1="1051.5" y1="20" x2="1051.5" y2="743" stroke="#f0f"/>
<line x1="11" y1="636.5" x2="43" y2="636.5" stroke="#f0f"/>
<line x1="11" y1="643.5" x2="43" y2="643.5" stroke="#f0f"/>
<line x1="11" y1="649.5" x2="43" y2="649.5" stroke="#f0f"/>
<line x1="11" y1="656.5" x2="43" y2="656.5" stroke="#f0f"/>
<line x1="11" y1="661.5" x2="43" y2="661.5" stroke="#f0f"/>
<line x1="11" y1="667.5" x2="43" y2="667.5" stroke="#f0f"/>
<line x1="11" y1="677.5" x2="43" y2="677.5" stroke="#f0f"/>
<line x1="11" y1="684.5" x2="43" y2="684.5" stroke="#f0f"/>
<line x1="11" y1="694.5" x2="43" y2="694.5" stroke="#f0f"/>
<line x1="11" y1="700.5" x2="43" y2="700.5" stroke="#f0f"/>
<line x1="11" y1="710.5" x2="43" y2="710.5" stroke="#f0f"/>
<line x1="11" y1="717.5" x2="43" y2="717.5" stroke="#f0f"/>
<line x1="11" y1="726.5" x2="43" y2="726.5" stroke="#f0f"/>
<line x1="11" y1="733.5" x2="43" y2="733.5" stroke="#f0f"/>
<text x="12.5" y="648" font-size="5.8" fill="#0f0" stroke="#0f0" stroke-width="0.25">借(通)用</text>
<text x="12.5" y="655.5" font-size="5.5" fill="#0f0" stroke="#0f0" stroke-width="0.25">件登记</text>
<text x="28" y="666.5" font-size="5.6" fill="#0f0" stroke="#0f0" stroke-width="0.25" text-anchor="middle">旧底图总号</text>
<text x="28.5" y="683.5" font-size="6.2" fill="#0f0" stroke="#0f0" stroke-width="0.25" text-anchor="middle">底图总号</text>
<text x="26.5" y="699.5" font-size="5.5" fill="#0f0" stroke="#0f0" stroke-width="0.25" text-anchor="middle">签名</text>
<text x="26.5" y="716" font-size="5.5" fill="#0f0" stroke="#0f0" stroke-width="0.25" text-anchor="middle">日期</text>
<text x="26.5" y="732" font-size="5.5" fill="#0f0" stroke="#0f0" stroke-width="0.25" text-anchor="middle">日期</text>
<line x1="0" y1="717.5" x2="58" y2="717.5" stroke="#fff"/>
<polygon points="57.5,711.5 74.5,717.5 57.5,723.5" stroke="#fff" fill="none"/>
<line x1="57" y1="717.5" x2="75" y2="717.5" stroke="#888"/>
<line x1="90.5" y1="709.5" x2="101.5" y2="727.5" stroke="#fff" stroke-width="0.86"/>
<line x1="101.5" y1="709.5" x2="89.5" y2="727.5" stroke="#fff" stroke-width="0.84"/>
</g>
</svg>

<div id="top">
 <div class="w" style="left:0;width:127px"></div>
 <span class="t" style="left:0">) 经典</span>
 <div class="ar" style="left:114px"></div>
 <svg class="ic" style="left:128px" width="50" height="15" viewBox="0 0 50 15"><rect x="2.500" y="-2" width="16" height="13.500" fill="#e4ecf6" stroke="#7fa3d0"/><path d="M3 -1h3.500v3h-3.500zM14.500 -1h3.500v3h-3.500zM3 8h3.500v3h-3.500zM14.500 8h3.500v3h-3.500z" fill="#4f86c6"/><circle cx="10.500" cy="4.500" r="4.300" fill="none" stroke="#4a4a4a" stroke-width="2.400" stroke-dasharray="2.200 1.200"/><circle cx="10.500" cy="4.500" r="3" fill="#5f6b78"/><circle cx="10.500" cy="4.500" r="1.800" fill="#4f86c6"/><rect x="26.500" y="-2" width="15" height="13.500" fill="#e6e9ee" stroke="#444" stroke-dasharray="2 1"/><path d="M27.500 4L34.500 -3L41 4V10.500H27.500Z" fill="#20242a"/></svg>
 <div class="sep" style="left:177px"></div><div class="sep" style="left:181px"></div><div class="sep" style="left:186px"></div>
 <svg class="ic" style="left:190px" width="24" height="15" viewBox="0 0 24 15"><path d="M3 2L12 -2L21 2L12 6Z" fill="#b9cde6" stroke="#5878a8" stroke-width=".8"/><path d="M3 5L12 9L21 5" fill="none" stroke="#5878a8"/><path d="M3 8L12 12L21 8" fill="none" stroke="#5878a8"/><path d="M3 2v6M21 2v6" stroke="#5878a8" stroke-width=".6"/></svg>
 <div class="w" style="left:215px;width:298px"></div>
 <svg class="ic" style="left:215px" width="72" height="15" viewBox="0 0 72 15"><path d="M11 -3a4 4 0 0 1 4 4c0 2-1.500 3-1.500 5h-5c0-2-1.500-3-1.500-5a4 4 0 0 1 4-4z" fill="#fffde0" stroke="#777" stroke-width=".8"/><rect x="9" y="6" width="4" height="4" fill="#556"/><circle cx="27" cy="3" r="6.500" fill="#ffe53b" stroke="#3a6ab0"/><circle cx="41" cy="2" r="4.500" fill="#a9c3e4" stroke="#6a8ab8" stroke-dasharray="2 1"/><rect x="42" y="2" width="8" height="7" fill="#fff" stroke="#6a8ab8"/><path d="M57 0h3v-3h2v3h6v10h-11z" fill="#e4d25a" stroke="#8a7a20" stroke-width=".8"/><path d="M59 3h7M59 6h7" stroke="#8a7a20" stroke-width=".8"/></svg>
 <div class="sq" style="left:285px"></div>
 <span class="t" style="left:299px">细实线</span>
 <div class="ar" style="left:502px"></div>
 <svg class="ic" style="left:514px" width="50" height="15" viewBox="0 0 50 15"><path d="M4 6L13 2L22 6L13 10Z" fill="#f0d63c" stroke="#8a7a20" stroke-width=".8"/><path d="M4 2L13 -2L22 2L13 6Z" fill="#a9c3e4" stroke="#5878a8" stroke-width=".8"/><path d="M3 12l5-4m-5 4v-3m0 3h3" stroke="#123c8a" stroke-width="1.200" fill="none"/><path d="M26 5L35 1L44 5L35 9Z" fill="#a9c3e4" stroke="#5878a8" stroke-width=".8"/><path d="M26 8L35 12L44 8" fill="none" stroke="#5878a8"/><path d="M35 -3v6m-3-3l3 3l3-3" stroke="#123c8a" stroke-width="1.500" fill="none"/></svg>
 <div class="sep" style="left:563px"></div><div class="sep" style="left:570px"></div><div class="sep" style="left:574px"></div>
 <div class="w" style="left:579px;width:148px"></div>
 <div class="sq" style="left:584px"></div>
 <span class="t by" style="left:598px">ByLayer</span>
 <div class="ar" style="left:715px"></div>
 <div class="sep" style="left:729px"></div>
 <div class="w" style="left:735px;width:157px"></div>
 <div class="ln" style="left:739px;width:59px"></div>
 <span class="t by" style="left:804px">ByLayer</span>
 <div class="ar" style="left:881px"></div>
 <div class="sep" style="left:895px"></div>
 <div class="w" style="left:900px;width:124px"></div>
 <div class="ln" style="left:905px;width:35px"></div>
 <span class="t by" style="left:945px">ByLayer</span>
 <div class="ar" style="left:1012px"></div>
 <div class="sep" style="left:1027px"></div>
 <div class="w" style="left:1032px;width:29px;background:#e9e9e9"></div>
 <span class="t" style="left:1041px;color:#9a9a9a;font-size:13px">随颜</span>
 <div class="edge"></div>
</div>
<div id="bot">
 <svg style="position:absolute;left:0;top:0" width="45" height="11" viewBox="0 0 45 11"><path d="M2.500 0v11M20.500 0v11M39.500 0v11" stroke="#b0b0b0"/><path d="M9 2v9l6-4.500z" fill="#000"/><path d="M27 2v9l6-4.500z" fill="#000"/><rect x="33.500" y="2" width="1.500" height="9" fill="#000"/></svg>
 <div class="tab" style="left:46px;width:31px"></div>
 <svg style="position:absolute;left:40px;top:0" width="140" height="11" viewBox="0 0 140 11"><path d="M3 0l3 11M43 0l-4 11M86 0l-4 11M127 0l-4 11" stroke="#000" stroke-width="1"/></svg>
 <span class="t" style="left:50px">模型</span>
 <span class="t" style="left:86px">布局1</span>
 <span class="t" style="left:128px">布局2</span>
</div>

</body></html>
